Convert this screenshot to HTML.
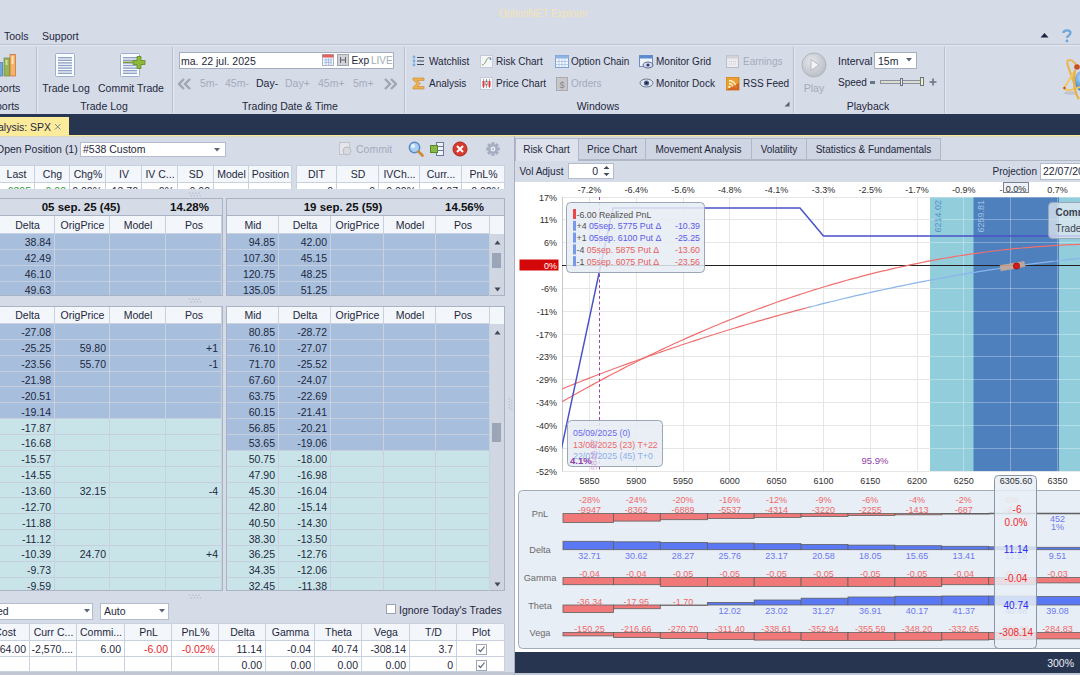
<!DOCTYPE html><html><head><meta charset="utf-8"><style>
html,body{margin:0;padding:0;}
body{width:1080px;height:675px;overflow:hidden;position:relative;background:#d6dbe8;font-family:"Liberation Sans",sans-serif;}
.t{position:absolute;white-space:nowrap;line-height:1.15;}
.r{position:absolute;}
svg{position:absolute;}
</style></head><body>
<div class="t" style="left:343.5px;width:400px;text-align:center;top:7.94px;font-size:10px;color:#f3e4b4;font-weight:normal;">OptionNET Explorer</div>
<div class="t" style="left:4px;top:30.49px;font-size:10.5px;color:#1e283c;font-weight:normal;">Tools</div>
<div class="t" style="left:42px;top:30.49px;font-size:10.5px;color:#1e283c;font-weight:normal;">Support</div>
<div class="r" style="left:0px;top:44px;width:1080px;height:1px;background:#bcc3d2;"></div>
<div class="r" style="left:0px;top:45px;width:1080px;height:1px;background:#e4e8f0;"></div>
<svg style="left:1040px;top:32px" width="9" height="6"><path d="M0.5 5.5 L4.5 1 L8.5 5.5 Z" fill="#1a2440"/></svg>
<svg style="left:1061px;top:28px" width="12" height="15"><path d="M2.5 5 C2.5 1.5 9.5 1.5 9.5 5 C9.5 7.5 6 7.5 6 10" stroke="#6fa6d8" stroke-width="2.2" fill="none"/><circle cx="6" cy="13" r="1.4" fill="#6fa6d8"/></svg>
<div class="r" style="left:36px;top:47px;width:1px;height:66px;background:#b7bfcf;"></div>
<div class="r" style="left:37px;top:47px;width:1px;height:66px;background:#e6e9f1;"></div>
<div class="r" style="left:172px;top:47px;width:1px;height:66px;background:#b7bfcf;"></div>
<div class="r" style="left:173px;top:47px;width:1px;height:66px;background:#e6e9f1;"></div>
<div class="r" style="left:404px;top:47px;width:1px;height:66px;background:#b7bfcf;"></div>
<div class="r" style="left:405px;top:47px;width:1px;height:66px;background:#e6e9f1;"></div>
<div class="r" style="left:793px;top:47px;width:1px;height:66px;background:#b7bfcf;"></div>
<div class="r" style="left:794px;top:47px;width:1px;height:66px;background:#e6e9f1;"></div>
<div class="r" style="left:944px;top:47px;width:1px;height:66px;background:#b7bfcf;"></div>
<div class="r" style="left:945px;top:47px;width:1px;height:66px;background:#e6e9f1;"></div>
<svg style="left:0px;top:52px" width="20" height="27"><rect x="-2" y="10.5" width="4.5" height="13.5" fill="#6fa8dc" stroke="#4a78a8" stroke-width="0.7"/><rect x="4" y="6" width="5.5" height="18" fill="#9ab45a" stroke="#6a8a3a" stroke-width="0.7"/><rect x="10" y="2.5" width="5.5" height="21.5" fill="#f2b469" stroke="#c86a30" stroke-width="0.7"/><rect x="11.5" y="4" width="2" height="8" fill="#fde0b0"/><rect x="5.5" y="8" width="2" height="5" fill="#d0e0a0"/></svg>
<div class="t" style="left:-3px;top:81.99px;font-size:10.5px;color:#1e283c;font-weight:normal;">ports</div>
<div class="t" style="left:-4px;top:100.49px;font-size:10.5px;color:#1e283c;font-weight:normal;">ports</div>
<svg style="left:54px;top:52px" width="24" height="27"><rect x="1.5" y="1.5" width="19" height="23" fill="#fbfcfe" stroke="#9fb0cc" stroke-width="1" rx="1"/><rect x="4" y="5.0" width="14" height="1.4" fill="#8ea3c8"/><rect x="4" y="7.6" width="14" height="1.4" fill="#8ea3c8"/><rect x="4" y="10.2" width="14" height="1.4" fill="#8ea3c8"/><rect x="4" y="12.8" width="14" height="1.4" fill="#8ea3c8"/><rect x="4" y="15.4" width="14" height="1.4" fill="#8ea3c8"/><rect x="4" y="18.0" width="14" height="1.4" fill="#8ea3c8"/><rect x="4" y="20.6" width="14" height="1.4" fill="#8ea3c8"/></svg>
<div class="t" style="left:-134px;width:400px;text-align:center;top:82.49px;font-size:10.5px;color:#1e283c;font-weight:normal;">Trade Log</div>
<svg style="left:119px;top:52px" width="28" height="27"><rect x="1.5" y="1.5" width="19" height="23" fill="#fbfcfe" stroke="#9fb0cc" stroke-width="1" rx="1"/><rect x="4" y="5.0" width="14" height="1.4" fill="#8ea3c8"/><rect x="4" y="7.6" width="14" height="1.4" fill="#8ea3c8"/><rect x="4" y="10.2" width="14" height="1.4" fill="#8ea3c8"/><rect x="4" y="12.8" width="14" height="1.4" fill="#8ea3c8"/><rect x="4" y="15.4" width="14" height="1.4" fill="#8ea3c8"/><rect x="4" y="18.0" width="14" height="1.4" fill="#8ea3c8"/><rect x="4" y="20.6" width="14" height="1.4" fill="#8ea3c8"/><path d="M14 8.5 h4 v-4 h4 v4 h4 v4 h-4 v4 h-4 v-4 h-4 z" fill="#8db83a" stroke="#5e8a22" stroke-width="0.8"/><rect x="4" y="9.5" width="10" height="1.6" fill="#7a9a3a"/></svg>
<div class="t" style="left:-69px;width:400px;text-align:center;top:82.49px;font-size:10.5px;color:#1e283c;font-weight:normal;">Commit Trade</div>
<div class="t" style="left:-96px;width:400px;text-align:center;top:100.49px;font-size:10.5px;color:#1e283c;font-weight:normal;">Trade Log</div>
<div class="r" style="left:179px;top:52px;width:215px;height:17px;background:#ffffff;border:1px solid #a6afc2;box-sizing:border-box;"></div>
<div class="t" style="left:181px;top:54.99px;font-size:10.5px;color:#1e283c;font-weight:normal;">ma. 22 jul. 2025</div>
<svg style="left:322px;top:54px" width="12" height="12"><rect x="0.5" y="0.5" width="11" height="11" fill="#f4f4f8" stroke="#b0b4c8"/><rect x="0.5" y="0.5" width="11" height="3" fill="#e0605a"/><path d="M2 6h8M2 8.5h8M4 4v7M6.5 4v7M9 4v7" stroke="#8eb0e0" stroke-width="0.7"/></svg>
<svg style="left:337px;top:54px" width="12" height="12"><rect x="0.5" y="0.5" width="11" height="11" fill="#d0d2d8" stroke="#a0a4b0"/><path d="M3.5 3v6M8.5 3v6M3.5 6h5" stroke="#606470" stroke-width="1"/></svg>
<div class="t" style="left:351.5px;top:55.26px;font-size:10.2px;color:#1e283c;font-weight:normal;">Exp</div>
<div class="t" style="left:371px;top:55.45px;font-size:10px;color:#a3abbb;font-weight:normal;">LIVE</div>
<svg style="left:178px;top:78px" width="14" height="12"><path d="M6 1 L1 6 L6 11 M12 1 L7 6 L12 11" stroke="#a0a6b4" stroke-width="2.4" fill="none"/></svg>
<svg style="left:383px;top:78px" width="14" height="12"><path d="M8 1 L13 6 L8 11 M2 1 L7 6 L2 11" stroke="#a0a6b4" stroke-width="2.4" fill="none"/></svg>
<div class="t" style="left:200px;top:76.99px;font-size:10.5px;color:#a3abbb;font-weight:normal;">5m-</div>
<div class="t" style="left:225px;top:76.99px;font-size:10.5px;color:#a3abbb;font-weight:normal;">45m-</div>
<div class="t" style="left:256px;top:76.99px;font-size:10.5px;color:#1e283c;font-weight:normal;">Day-</div>
<div class="t" style="left:285px;top:76.99px;font-size:10.5px;color:#a3abbb;font-weight:normal;">Day+</div>
<div class="t" style="left:318px;top:76.99px;font-size:10.5px;color:#a3abbb;font-weight:normal;">45m+</div>
<div class="t" style="left:353px;top:76.99px;font-size:10.5px;color:#a3abbb;font-weight:normal;">5m+</div>
<div class="t" style="left:90px;width:400px;text-align:center;top:100.49px;font-size:10.5px;color:#1e283c;font-weight:normal;">Trading Date &amp; Time</div>
<svg style="left:412px;top:55px" width="14" height="12"><path d="M2 1.5v9" stroke="#a8c8e8" stroke-width="1"/><circle cx="2" cy="2" r="1.4" fill="#7aaee0"/><circle cx="2" cy="6" r="1.4" fill="#7aaee0"/><circle cx="2" cy="10" r="1.4" fill="#7aaee0"/><path d="M5 2.5h7M5 6h7M5 9.5h7" stroke="#404858" stroke-width="1.1"/></svg>
<div class="t" style="left:429px;top:56.24px;font-size:10px;color:#1e283c;font-weight:normal;">Watchlist</div>
<svg style="left:480px;top:55px" width="14" height="14"><rect x="0.5" y="0.5" width="12" height="12" fill="#f4f6fa" stroke="#c4cad8"/><path d="M2 10 C4 10 5 8 6 6 C7 3 9 2 11 3" stroke="#7aa050" stroke-width="1" fill="none"/><circle cx="10.5" cy="4" r="1" fill="#5a8ad0"/></svg>
<div class="t" style="left:496px;top:56.24px;font-size:10px;color:#1e283c;font-weight:normal;">Risk Chart</div>
<svg style="left:555px;top:55px" width="14" height="13"><rect x="0.5" y="0.5" width="13" height="12" fill="#f4f8fe" stroke="#7aa2d8"/><rect x="0.5" y="0.5" width="13" height="3" fill="#8fb4e4"/><path d="M0.5 6.5h13M0.5 9.5h13M4 3.5v9M7 3.5v9M10 3.5v9" stroke="#9ebce4" stroke-width="0.7"/></svg>
<div class="t" style="left:571px;top:56.24px;font-size:10px;color:#1e283c;font-weight:normal;">Option Chain</div>
<svg style="left:639px;top:55px" width="15" height="14"><rect x="0.5" y="0.5" width="13" height="11" fill="#f0f4fa" stroke="#6a8ec8"/><rect x="0.5" y="0.5" width="13" height="3" fill="#5a8ad0"/><ellipse cx="9" cy="10" rx="5" ry="3" fill="#d8dce8" stroke="#405080" stroke-width="0.8"/><circle cx="9" cy="10" r="1.6" fill="#304070"/></svg>
<div class="t" style="left:656px;top:56.24px;font-size:10px;color:#1e283c;font-weight:normal;">Monitor Grid</div>
<svg style="left:726px;top:55px" width="14" height="14"><rect x="0.5" y="0.5" width="12" height="12" fill="#ececf0" stroke="#bcbcc4"/><rect x="0.5" y="0.5" width="12" height="3" fill="#d0d0d6"/><path d="M3 6.5h7M3 9h7" stroke="#c8c8d0" stroke-width="0.9" stroke-dasharray="1 1"/></svg>
<div class="t" style="left:743px;top:56.24px;font-size:10px;color:#a3abbb;font-weight:normal;">Earnings</div>
<svg style="left:412px;top:77px" width="14" height="13"><path d="M1 1 H12 V3.5 H5 L8.5 6.5 L5 9.5 H12 V12 H1 V10 L5 6.5 L1 3 Z" fill="#f0b050" stroke="#c88828" stroke-width="0.6"/></svg>
<div class="t" style="left:429px;top:78.25px;font-size:10px;color:#1e283c;font-weight:normal;">Analysis</div>
<svg style="left:480px;top:77px" width="14" height="14"><rect x="0.5" y="0.5" width="12" height="12" fill="#f4f6fa" stroke="#c4cad8"/><path d="M3.5 2v9M6.5 2v9M9.5 2v9" stroke="#707070" stroke-width="0.6"/><path d="M2.5 4h2v5l-1 2l-1-2z" fill="#e03a3a"/><path d="M8.5 4h2v5l-1 2l-1-2z" fill="#e03a3a"/><rect x="5.8" y="4" width="1.4" height="4" fill="#f8f8f8" stroke="#606060" stroke-width="0.5"/></svg>
<div class="t" style="left:496px;top:78.25px;font-size:10px;color:#1e283c;font-weight:normal;">Price Chart</div>
<svg style="left:555px;top:77px" width="14" height="14"><rect x="1.5" y="0.5" width="11" height="13" fill="#c8c8cc" stroke="#a8a8b0"/><text x="7" y="11" font-size="9" text-anchor="middle" fill="#888" font-family="Liberation Sans">$</text></svg>
<div class="t" style="left:571px;top:78.25px;font-size:10px;color:#a3abbb;font-weight:normal;">Orders</div>
<svg style="left:639px;top:77px" width="15" height="12"><ellipse cx="7.5" cy="6" rx="6.5" ry="4" fill="#e0e4ec" stroke="#707a90" stroke-width="1"/><circle cx="7.5" cy="6" r="2.6" fill="#4a6090"/><circle cx="7.5" cy="6" r="1.2" fill="#1a2030"/></svg>
<div class="t" style="left:656px;top:78.25px;font-size:10px;color:#1e283c;font-weight:normal;">Monitor Dock</div>
<svg style="left:726px;top:77px" width="14" height="14"><rect x="0" y="0" width="13" height="13" fill="#e8a030" stroke="#c87818" stroke-width="0.8"/><path d="M3 3.5 A7 7 0 0 1 10 10.5 M3 6.5 A4 4 0 0 1 7 10.5" stroke="#fff4d8" stroke-width="1.3" fill="none"/><circle cx="3.5" cy="10" r="1.2" fill="#fff4d8"/><path d="M0 13 L13 6 V13 Z" fill="#d05020" opacity="0.7"/></svg>
<div class="t" style="left:743px;top:78.25px;font-size:10px;color:#1e283c;font-weight:normal;">RSS Feed</div>
<div class="t" style="left:398px;width:400px;text-align:center;top:100.49px;font-size:10.5px;color:#1e283c;font-weight:normal;">Windows</div>
<svg style="left:784px;top:101px" width="6" height="6"><path d="M5.5 0.5 V5.5 H0.5 Z" fill="#5a6478"/></svg>
<svg style="left:801px;top:52px" width="27" height="27"><defs><radialGradient id="pg" cx="0.4" cy="0.35" r="0.7"><stop offset="0" stop-color="#e4e6ea"/><stop offset="1" stop-color="#b8bcc4"/></radialGradient></defs><circle cx="13" cy="13" r="12" fill="url(#pg)" stroke="#b0b4bc"/><path d="M10 7.5 L18 13 L10 18.5 Z" fill="#f4f4f6" stroke="#a8acb4" stroke-width="0.8"/></svg>
<div class="t" style="left:614px;width:400px;text-align:center;top:82.49px;font-size:10.5px;color:#a3abbb;font-weight:normal;">Play</div>
<div class="t" style="left:838px;top:54.99px;font-size:10.5px;color:#1e283c;font-weight:normal;">Interval</div>
<div class="r" style="left:874px;top:52px;width:43px;height:17px;background:#ffffff;border:1px solid #a6afc2;box-sizing:border-box;"></div>
<div class="t" style="left:878px;top:54.99px;font-size:10.5px;color:#1e283c;font-weight:normal;">15m</div>
<svg style="left:906px;top:58px" width="6" height="4"><path d="M0 0 H6 L3 3.5 Z" fill="#5a6478"/></svg>
<div class="t" style="left:838px;top:77.45px;font-size:10px;color:#1e283c;font-weight:normal;">Speed</div>
<div class="r" style="left:870px;top:81px;width:5px;height:3px;background:#6a7488;"></div>
<div class="r" style="left:880px;top:80px;width:42px;height:4px;background:#dcdcd0;border:1px solid #8a90a0;box-sizing:border-box;"></div>
<div class="r" style="left:900px;top:78px;width:3px;height:8px;background:#e8e8e8;border:1px solid #6a7488;box-sizing:border-box;"></div>
<div class="r" style="left:920px;top:77px;width:4px;height:9px;background:#f8f0b0;border:1px solid #6a7488;box-sizing:border-box;"></div>
<svg style="left:929px;top:78px" width="8" height="8"><path d="M4 0.5v7M0.5 4h7" stroke="#6a7488" stroke-width="1.6"/></svg>
<div class="t" style="left:668px;width:400px;text-align:center;top:100.49px;font-size:10.5px;color:#1e283c;font-weight:normal;">Playback</div>
<svg style="left:1055px;top:52px" width="25" height="50"><defs><radialGradient id="sph" cx="0.35" cy="0.35" r="0.8"><stop offset="0" stop-color="#c8e4fa"/><stop offset="0.5" stop-color="#5a9ad8"/><stop offset="1" stop-color="#2a5aa0"/></radialGradient></defs><ellipse cx="16" cy="41" rx="7" ry="1.8" fill="#b8bcc8" opacity="0.7"/><circle cx="31" cy="29" r="11.5" fill="url(#sph)"/><path d="M22 14 C17 6 10 6 13 14 L20 34" stroke="#e8b850" stroke-width="2.2" fill="none"/><path d="M9 36 L19 20" stroke="#f0c860" stroke-width="2" fill="none"/><path d="M9 36 C11 40 17 38 25 35" stroke="#f0c860" stroke-width="2" fill="none"/><path d="M20 18 C18 28 19 40 24 47" stroke="#e8b040" stroke-width="2.2" fill="none"/><circle cx="22" cy="15" r="2.8" fill="#c8501c"/><circle cx="9.5" cy="36" r="1.3" fill="#c8501c"/></svg>
<div class="r" style="left:0px;top:114px;width:1080px;height:21px;background:#283551;"></div>
<div class="r" style="left:0px;top:135px;width:1080px;height:1px;background:#f8e89c;"></div>
<div class="r" style="left:0px;top:136px;width:1080px;height:1px;background:#d8d9c4;"></div>
<div class="r" style="left:0px;top:117px;width:69px;height:19px;background:#fdeb9c;"></div>
<div class="t" style="left:-2px;top:120.99px;font-size:10.5px;color:#1e283c;font-weight:normal;">alysis: SPX</div>
<svg style="left:54px;top:123px" width="8" height="8"><path d="M1 1 L6.5 6.5 M6.5 1 L1 6.5" stroke="#7a8498" stroke-width="1"/></svg>
<div class="t" style="left:-4px;top:143.49px;font-size:10.5px;color:#1e283c;font-weight:normal;">Open Position (1)</div>
<div class="r" style="left:80px;top:142px;width:146px;height:15px;background:#ffffff;border:1px solid #b3bccd;box-sizing:border-box;"></div>
<div class="t" style="left:83px;top:143.49px;font-size:10.5px;color:#1e283c;font-weight:normal;">#538 Custom</div>
<svg style="left:214px;top:148px" width="6" height="4"><path d="M0 0 H6 L3 3.5 Z" fill="#5a6478"/></svg>
<svg style="left:339px;top:142px" width="14" height="14"><rect x="0.5" y="0.5" width="10" height="12" fill="#e4e6ea" stroke="#c0c4cc"/><circle cx="8" cy="9" r="4" fill="#d8dade" stroke="#b8bcc4"/></svg>
<div class="t" style="left:356px;top:143.49px;font-size:10.5px;color:#a3abbb;font-weight:normal;">Commit</div>
<svg style="left:408px;top:141px" width="16" height="16"><circle cx="6.5" cy="6.5" r="5.2" fill="#a8d0f4" stroke="#5a8ac4" stroke-width="1.4"/><circle cx="5" cy="5" r="2" fill="#e8f4ff"/><path d="M10.5 10.5 L14.5 14.5" stroke="#d08a30" stroke-width="2.6" stroke-linecap="round"/></svg>
<svg style="left:430px;top:142px" width="15" height="14"><rect x="6.5" y="0.5" width="7" height="13" fill="#f0f4fa" stroke="#6a7a98"/><path d="M6.5 4.5h7M6.5 8.5h7" stroke="#6a7a98"/><rect x="0.5" y="3.5" width="7" height="7" fill="#8ab848" stroke="#5a8828"/></svg>
<svg style="left:452px;top:141px" width="16" height="16"><circle cx="8" cy="8" r="7" fill="#d83a30" stroke="#a82820"/><path d="M5 5 L11 11 M11 5 L5 11" stroke="#fff" stroke-width="2"/></svg>
<svg style="left:486px;top:142px" width="14" height="14"><g transform="translate(7 7)"><rect x="-1.6" y="-6.8" width="3.2" height="3" fill="#a4aec0" transform="rotate(0)"/><rect x="-1.6" y="-6.8" width="3.2" height="3" fill="#a4aec0" transform="rotate(45)"/><rect x="-1.6" y="-6.8" width="3.2" height="3" fill="#a4aec0" transform="rotate(90)"/><rect x="-1.6" y="-6.8" width="3.2" height="3" fill="#a4aec0" transform="rotate(135)"/><rect x="-1.6" y="-6.8" width="3.2" height="3" fill="#a4aec0" transform="rotate(180)"/><rect x="-1.6" y="-6.8" width="3.2" height="3" fill="#a4aec0" transform="rotate(225)"/><rect x="-1.6" y="-6.8" width="3.2" height="3" fill="#a4aec0" transform="rotate(270)"/><rect x="-1.6" y="-6.8" width="3.2" height="3" fill="#a4aec0" transform="rotate(315)"/><circle r="4.7" fill="#a4aec0"/><circle r="2.4" fill="#eef1f6"/><circle r="1.2" fill="#b8c0d0"/></g></svg>
<div class="r" style="left:-2px;top:165px;width:294px;height:24px;overflow:hidden;">
<div class="r" style="left:0px;top:0px;width:294px;height:18px;background:#f3f6fb;"></div>
<div class="r" style="left:0px;top:18px;width:294px;height:15px;background:#ffffff;"></div>
<div class="r" style="left:0px;top:32px;width:294px;height:1px;background:#c9d1de;"></div>
<div class="r" style="left:0px;top:17px;width:294px;height:1px;background:#c9d1de;"></div>
<div class="r" style="left:36px;top:0px;width:1px;height:24px;background:#c9d1de;"></div>
<div class="r" style="left:71px;top:0px;width:1px;height:24px;background:#c9d1de;"></div>
<div class="r" style="left:107px;top:0px;width:1px;height:24px;background:#c9d1de;"></div>
<div class="r" style="left:143px;top:0px;width:1px;height:24px;background:#c9d1de;"></div>
<div class="r" style="left:179px;top:0px;width:1px;height:24px;background:#c9d1de;"></div>
<div class="r" style="left:215px;top:0px;width:1px;height:24px;background:#c9d1de;"></div>
<div class="r" style="left:250px;top:0px;width:1px;height:24px;background:#c9d1de;"></div>
<div class="r" style="left:293px;top:0px;width:1px;height:24px;background:#c9d1de;"></div>
<div class="t" style="left:-181.5px;width:400px;text-align:center;top:3.49px;font-size:10.5px;color:#1e283c;font-weight:normal;">Last</div>
<div class="t" style="left:-145.5px;width:400px;text-align:center;top:3.49px;font-size:10.5px;color:#1e283c;font-weight:normal;">Chg</div>
<div class="t" style="left:-110.0px;width:400px;text-align:center;top:3.49px;font-size:10.5px;color:#1e283c;font-weight:normal;">Chg%</div>
<div class="t" style="left:-74.0px;width:400px;text-align:center;top:3.49px;font-size:10.5px;color:#1e283c;font-weight:normal;">IV</div>
<div class="t" style="left:-38.0px;width:400px;text-align:center;top:3.49px;font-size:10.5px;color:#1e283c;font-weight:normal;">IV C...</div>
<div class="t" style="left:-2.0px;width:400px;text-align:center;top:3.49px;font-size:10.5px;color:#1e283c;font-weight:normal;">SD</div>
<div class="t" style="left:33.5px;width:400px;text-align:center;top:3.49px;font-size:10.5px;color:#1e283c;font-weight:normal;">Model</div>
<div class="t" style="left:72.5px;width:400px;text-align:center;top:3.49px;font-size:10.5px;color:#1e283c;font-weight:normal;">Position</div>
<div class="t" style="left:0px;width:33px;text-align:right;top:19.50px;font-size:10.5px;color:#2a9a3a">6305</div>
<div class="t" style="left:37px;width:31px;text-align:right;top:19.50px;font-size:10.5px;color:#2a9a3a">0.00</div>
<div class="t" style="left:72px;width:32px;text-align:right;top:19.50px;font-size:10.5px;color:#1e283c">0.00%</div>
<div class="t" style="left:108px;width:32px;text-align:right;top:19.50px;font-size:10.5px;color:#1e283c">13.70</div>
<div class="t" style="left:144px;width:32px;text-align:right;top:19.50px;font-size:10.5px;color:#1e283c">0%</div>
<div class="t" style="left:180px;width:32px;text-align:right;top:19.50px;font-size:10.5px;color:#1e283c">0.00</div>
</div>
<div class="r" style="left:-2px;top:165px;width:294px;height:1px;background:#c9d1de;"></div>
<div class="r" style="left:296px;top:165px;width:209px;height:24px;overflow:hidden;">
<div class="r" style="left:0px;top:0px;width:209px;height:18px;background:#f3f6fb;"></div>
<div class="r" style="left:0px;top:18px;width:209px;height:15px;background:#ffffff;"></div>
<div class="r" style="left:0px;top:32px;width:209px;height:1px;background:#c9d1de;"></div>
<div class="r" style="left:0px;top:17px;width:209px;height:1px;background:#c9d1de;"></div>
<div class="r" style="left:40px;top:0px;width:1px;height:24px;background:#c9d1de;"></div>
<div class="r" style="left:82px;top:0px;width:1px;height:24px;background:#c9d1de;"></div>
<div class="r" style="left:123px;top:0px;width:1px;height:24px;background:#c9d1de;"></div>
<div class="r" style="left:165px;top:0px;width:1px;height:24px;background:#c9d1de;"></div>
<div class="r" style="left:208px;top:0px;width:1px;height:24px;background:#c9d1de;"></div>
<div class="t" style="left:-179.5px;width:400px;text-align:center;top:3.49px;font-size:10.5px;color:#1e283c;font-weight:normal;">DIT</div>
<div class="t" style="left:-138.0px;width:400px;text-align:center;top:3.49px;font-size:10.5px;color:#1e283c;font-weight:normal;">SD</div>
<div class="t" style="left:-96.5px;width:400px;text-align:center;top:3.49px;font-size:10.5px;color:#1e283c;font-weight:normal;">IVCh...</div>
<div class="t" style="left:-55.0px;width:400px;text-align:center;top:3.49px;font-size:10.5px;color:#1e283c;font-weight:normal;">Curr...</div>
<div class="t" style="left:-12.5px;width:400px;text-align:center;top:3.49px;font-size:10.5px;color:#1e283c;font-weight:normal;">PnL%</div>
<div class="t" style="left:0px;width:37px;text-align:right;top:19.50px;font-size:10.5px;color:#1e283c">0</div>
<div class="t" style="left:41px;width:38px;text-align:right;top:19.50px;font-size:10.5px;color:#1e283c">0</div>
<div class="t" style="left:83px;width:37px;text-align:right;top:19.50px;font-size:10.5px;color:#1e283c">0.00%</div>
<div class="t" style="left:124px;width:38px;text-align:right;top:19.50px;font-size:10.5px;color:#1e283c">24.07</div>
<div class="t" style="left:166px;width:39px;text-align:right;top:19.50px;font-size:10.5px;color:#1e283c">0.02%</div>
</div>
<div class="r" style="left:296px;top:165px;width:209px;height:1px;background:#c9d1de;"></div>
<div class="r" style="left:296px;top:165px;width:1px;height:24px;background:#c9d1de;"></div>
<svg style="left:189px;top:192px" width="12" height="5"><rect x="0" y="0.5" width="1.5" height="1.5" fill="#bcc2cf"/><rect x="1.5" y="3" width="1.5" height="1.5" fill="#bcc2cf"/><rect x="3" y="0.5" width="1.5" height="1.5" fill="#bcc2cf"/><rect x="4.5" y="3" width="1.5" height="1.5" fill="#bcc2cf"/><rect x="6" y="0.5" width="1.5" height="1.5" fill="#bcc2cf"/><rect x="7.5" y="3" width="1.5" height="1.5" fill="#bcc2cf"/><rect x="9" y="0.5" width="1.5" height="1.5" fill="#bcc2cf"/><rect x="10.5" y="3" width="1.5" height="1.5" fill="#bcc2cf"/></svg>
<svg style="left:189px;top:298px" width="12" height="5"><rect x="0" y="0.5" width="1.5" height="1.5" fill="#bcc2cf"/><rect x="1.5" y="3" width="1.5" height="1.5" fill="#bcc2cf"/><rect x="3" y="0.5" width="1.5" height="1.5" fill="#bcc2cf"/><rect x="4.5" y="3" width="1.5" height="1.5" fill="#bcc2cf"/><rect x="6" y="0.5" width="1.5" height="1.5" fill="#bcc2cf"/><rect x="7.5" y="3" width="1.5" height="1.5" fill="#bcc2cf"/><rect x="9" y="0.5" width="1.5" height="1.5" fill="#bcc2cf"/><rect x="10.5" y="3" width="1.5" height="1.5" fill="#bcc2cf"/></svg>
<svg style="left:189px;top:594px" width="12" height="5"><rect x="0" y="0.5" width="1.5" height="1.5" fill="#bcc2cf"/><rect x="1.5" y="3" width="1.5" height="1.5" fill="#bcc2cf"/><rect x="3" y="0.5" width="1.5" height="1.5" fill="#bcc2cf"/><rect x="4.5" y="3" width="1.5" height="1.5" fill="#bcc2cf"/><rect x="6" y="0.5" width="1.5" height="1.5" fill="#bcc2cf"/><rect x="7.5" y="3" width="1.5" height="1.5" fill="#bcc2cf"/><rect x="9" y="0.5" width="1.5" height="1.5" fill="#bcc2cf"/><rect x="10.5" y="3" width="1.5" height="1.5" fill="#bcc2cf"/></svg>
<svg style="left:508px;top:398px" width="5" height="12"><rect x="0.5" y="0" width="1.5" height="1.5" fill="#bcc2cf"/><rect x="3" y="1.5" width="1.5" height="1.5" fill="#bcc2cf"/><rect x="0.5" y="3" width="1.5" height="1.5" fill="#bcc2cf"/><rect x="3" y="4.5" width="1.5" height="1.5" fill="#bcc2cf"/><rect x="0.5" y="6" width="1.5" height="1.5" fill="#bcc2cf"/><rect x="3" y="7.5" width="1.5" height="1.5" fill="#bcc2cf"/><rect x="0.5" y="9" width="1.5" height="1.5" fill="#bcc2cf"/><rect x="3" y="10.5" width="1.5" height="1.5" fill="#bcc2cf"/></svg>
<div class="r" style="left:-20px;top:198px;width:243px;height:98px;background:#d6dbe8;border:1px solid #aab3c4;box-sizing:border-box;"></div>
<div class="r" style="left:-20px;top:215px;width:243px;height:1px;background:#aab3c4;"></div>
<div class="t" style="left:-119px;width:400px;text-align:center;top:201.09px;font-size:11.5px;color:#111111;font-weight:bold;">05 sep. 25 (45)</div>
<div class="t" style="right:871px;top:201.09px;font-size:11.5px;color:#111111;font-weight:bold;">14.28%</div>
<div class="r" style="left:-19px;top:216px;width:241px;height:79px;overflow:hidden;">
<div class="r" style="left:0px;top:0px;width:241px;height:18px;background:#f3f6fb;"></div>
<div class="r" style="left:0px;top:18.0px;width:241px;height:15.86px;background:#a7bfdd;"></div>
<div class="r" style="left:0px;top:32.86px;width:241px;height:1px;background:#c5cfde;"></div>
<div class="r" style="left:0px;top:33.86px;width:241px;height:15.86px;background:#a7bfdd;"></div>
<div class="r" style="left:0px;top:48.72px;width:241px;height:1px;background:#c5cfde;"></div>
<div class="r" style="left:0px;top:49.72px;width:241px;height:15.86px;background:#a7bfdd;"></div>
<div class="r" style="left:0px;top:64.58px;width:241px;height:1px;background:#c5cfde;"></div>
<div class="r" style="left:0px;top:65.58px;width:241px;height:15.86px;background:#a7bfdd;"></div>
<div class="r" style="left:0px;top:80.44px;width:241px;height:1px;background:#c5cfde;"></div>
<div class="r" style="left:0px;top:17px;width:241px;height:1px;background:#c9d1de;"></div>
<div class="r" style="left:73px;top:0px;width:1px;height:79px;background:#c9d1de;"></div>
<div class="r" style="left:128px;top:0px;width:1px;height:79px;background:#c9d1de;"></div>
<div class="r" style="left:184px;top:0px;width:1px;height:79px;background:#c9d1de;"></div>
<div class="r" style="left:240px;top:0px;width:1px;height:79px;background:#c9d1de;"></div>
<div class="t" style="left:-153.5px;width:400px;text-align:center;top:3.49px;font-size:10.5px;color:#1e283c;font-weight:normal;">Delta</div>
<div class="t" style="left:-98.5px;width:400px;text-align:center;top:3.49px;font-size:10.5px;color:#1e283c;font-weight:normal;">OrigPrice</div>
<div class="t" style="left:-43.0px;width:400px;text-align:center;top:3.49px;font-size:10.5px;color:#1e283c;font-weight:normal;">Model</div>
<div class="t" style="left:13.0px;width:400px;text-align:center;top:3.49px;font-size:10.5px;color:#1e283c;font-weight:normal;">Pos</div>
<div class="t" style="left:19px;width:51px;text-align:right;top:20.36px;font-size:10.5px;color:#1e283c">38.84</div>
<div class="t" style="left:19px;width:51px;text-align:right;top:36.22px;font-size:10.5px;color:#1e283c">42.49</div>
<div class="t" style="left:19px;width:51px;text-align:right;top:52.08px;font-size:10.5px;color:#1e283c">46.10</div>
<div class="t" style="left:19px;width:51px;text-align:right;top:67.94px;font-size:10.5px;color:#1e283c">49.63</div>
</div>
<div class="r" style="left:226px;top:198px;width:279px;height:98px;background:#d6dbe8;border:1px solid #aab3c4;box-sizing:border-box;"></div>
<div class="r" style="left:226px;top:215px;width:279px;height:1px;background:#aab3c4;"></div>
<div class="t" style="left:143px;width:400px;text-align:center;top:201.09px;font-size:11.5px;color:#111111;font-weight:bold;">19 sep. 25 (59)</div>
<div class="t" style="right:596px;top:201.09px;font-size:11.5px;color:#111111;font-weight:bold;">14.56%</div>
<div class="r" style="left:227px;top:216px;width:263px;height:79px;overflow:hidden;">
<div class="r" style="left:0px;top:0px;width:263px;height:18px;background:#f3f6fb;"></div>
<div class="r" style="left:0px;top:18.0px;width:263px;height:15.86px;background:#a7bfdd;"></div>
<div class="r" style="left:0px;top:32.86px;width:263px;height:1px;background:#c5cfde;"></div>
<div class="r" style="left:0px;top:33.86px;width:263px;height:15.86px;background:#a7bfdd;"></div>
<div class="r" style="left:0px;top:48.72px;width:263px;height:1px;background:#c5cfde;"></div>
<div class="r" style="left:0px;top:49.72px;width:263px;height:15.86px;background:#a7bfdd;"></div>
<div class="r" style="left:0px;top:64.58px;width:263px;height:1px;background:#c5cfde;"></div>
<div class="r" style="left:0px;top:65.58px;width:263px;height:15.86px;background:#a7bfdd;"></div>
<div class="r" style="left:0px;top:80.44px;width:263px;height:1px;background:#c5cfde;"></div>
<div class="r" style="left:0px;top:17px;width:263px;height:1px;background:#c9d1de;"></div>
<div class="r" style="left:51px;top:0px;width:1px;height:79px;background:#c9d1de;"></div>
<div class="r" style="left:103px;top:0px;width:1px;height:79px;background:#c9d1de;"></div>
<div class="r" style="left:156px;top:0px;width:1px;height:79px;background:#c9d1de;"></div>
<div class="r" style="left:208px;top:0px;width:1px;height:79px;background:#c9d1de;"></div>
<div class="r" style="left:262px;top:0px;width:1px;height:79px;background:#c9d1de;"></div>
<div class="t" style="left:-174.0px;width:400px;text-align:center;top:3.49px;font-size:10.5px;color:#1e283c;font-weight:normal;">Mid</div>
<div class="t" style="left:-122.0px;width:400px;text-align:center;top:3.49px;font-size:10.5px;color:#1e283c;font-weight:normal;">Delta</div>
<div class="t" style="left:-69.5px;width:400px;text-align:center;top:3.49px;font-size:10.5px;color:#1e283c;font-weight:normal;">OrigPrice</div>
<div class="t" style="left:-17.0px;width:400px;text-align:center;top:3.49px;font-size:10.5px;color:#1e283c;font-weight:normal;">Model</div>
<div class="t" style="left:36.0px;width:400px;text-align:center;top:3.49px;font-size:10.5px;color:#1e283c;font-weight:normal;">Pos</div>
<div class="t" style="left:0px;width:48px;text-align:right;top:20.36px;font-size:10.5px;color:#1e283c">94.85</div>
<div class="t" style="left:52px;width:48px;text-align:right;top:20.36px;font-size:10.5px;color:#1e283c">42.00</div>
<div class="t" style="left:0px;width:48px;text-align:right;top:36.22px;font-size:10.5px;color:#1e283c">107.30</div>
<div class="t" style="left:52px;width:48px;text-align:right;top:36.22px;font-size:10.5px;color:#1e283c">45.15</div>
<div class="t" style="left:0px;width:48px;text-align:right;top:52.08px;font-size:10.5px;color:#1e283c">120.75</div>
<div class="t" style="left:52px;width:48px;text-align:right;top:52.08px;font-size:10.5px;color:#1e283c">48.25</div>
<div class="t" style="left:0px;width:48px;text-align:right;top:67.94px;font-size:10.5px;color:#1e283c">135.05</div>
<div class="t" style="left:52px;width:48px;text-align:right;top:67.94px;font-size:10.5px;color:#1e283c">51.25</div>
</div>
<div class="r" style="left:490px;top:216px;width:14px;height:18px;background:#f3f6fb;"></div>
<div class="r" style="left:489px;top:216px;width:1px;height:80px;background:#c9d1de;"></div>
<div class="r" style="left:490px;top:234px;width:14px;height:61px;background:#d0d6e2;"></div>
<div class="r" style="left:492px;top:253px;width:9px;height:15px;background:#9aa5b8;"></div>
<svg style="left:494px;top:240px" width="7" height="5"><path d="M0.5 4.5 L3.5 0.5 L6.5 4.5 Z" fill="#404a5c"/></svg>
<svg style="left:494px;top:287px" width="7" height="5"><path d="M0.5 0.5 L3.5 4.5 L6.5 0.5 Z" fill="#404a5c"/></svg>
<div class="r" style="left:-20px;top:306px;width:243px;height:285px;background:#d6dbe8;border:1px solid #aab3c4;box-sizing:border-box;"></div>
<div class="r" style="left:-19px;top:307px;width:241px;height:283px;overflow:hidden;">
<div class="r" style="left:0px;top:0px;width:241px;height:17px;background:#f3f6fb;"></div>
<div class="r" style="left:0px;top:17.0px;width:241px;height:15.86px;background:#a7bfdd;"></div>
<div class="r" style="left:0px;top:31.86px;width:241px;height:1px;background:#c5cfde;"></div>
<div class="r" style="left:0px;top:32.86px;width:241px;height:15.86px;background:#a7bfdd;"></div>
<div class="r" style="left:0px;top:47.72px;width:241px;height:1px;background:#c5cfde;"></div>
<div class="r" style="left:0px;top:48.72px;width:241px;height:15.86px;background:#a7bfdd;"></div>
<div class="r" style="left:0px;top:63.58px;width:241px;height:1px;background:#c5cfde;"></div>
<div class="r" style="left:0px;top:64.58px;width:241px;height:15.86px;background:#a7bfdd;"></div>
<div class="r" style="left:0px;top:79.44px;width:241px;height:1px;background:#c5cfde;"></div>
<div class="r" style="left:0px;top:80.44px;width:241px;height:15.86px;background:#a7bfdd;"></div>
<div class="r" style="left:0px;top:95.3px;width:241px;height:1px;background:#c5cfde;"></div>
<div class="r" style="left:0px;top:96.3px;width:241px;height:15.86px;background:#a7bfdd;"></div>
<div class="r" style="left:0px;top:111.16px;width:241px;height:1px;background:#c5cfde;"></div>
<div class="r" style="left:0px;top:112.16px;width:241px;height:15.86px;background:#c8e4e9;"></div>
<div class="r" style="left:0px;top:127.01999999999998px;width:241px;height:1px;background:#c5cfde;"></div>
<div class="r" style="left:0px;top:128.01999999999998px;width:241px;height:15.86px;background:#c8e4e9;"></div>
<div class="r" style="left:0px;top:142.88px;width:241px;height:1px;background:#c5cfde;"></div>
<div class="r" style="left:0px;top:143.88px;width:241px;height:15.86px;background:#c8e4e9;"></div>
<div class="r" style="left:0px;top:158.74px;width:241px;height:1px;background:#c5cfde;"></div>
<div class="r" style="left:0px;top:159.74px;width:241px;height:15.86px;background:#c8e4e9;"></div>
<div class="r" style="left:0px;top:174.6px;width:241px;height:1px;background:#c5cfde;"></div>
<div class="r" style="left:0px;top:175.6px;width:241px;height:15.86px;background:#c8e4e9;"></div>
<div class="r" style="left:0px;top:190.45999999999998px;width:241px;height:1px;background:#c5cfde;"></div>
<div class="r" style="left:0px;top:191.45999999999998px;width:241px;height:15.86px;background:#c8e4e9;"></div>
<div class="r" style="left:0px;top:206.32px;width:241px;height:1px;background:#c5cfde;"></div>
<div class="r" style="left:0px;top:207.32px;width:241px;height:15.86px;background:#c8e4e9;"></div>
<div class="r" style="left:0px;top:222.18px;width:241px;height:1px;background:#c5cfde;"></div>
<div class="r" style="left:0px;top:223.18px;width:241px;height:15.86px;background:#c8e4e9;"></div>
<div class="r" style="left:0px;top:238.04px;width:241px;height:1px;background:#c5cfde;"></div>
<div class="r" style="left:0px;top:239.04px;width:241px;height:15.86px;background:#c8e4e9;"></div>
<div class="r" style="left:0px;top:253.89999999999998px;width:241px;height:1px;background:#c5cfde;"></div>
<div class="r" style="left:0px;top:254.89999999999998px;width:241px;height:15.86px;background:#c8e4e9;"></div>
<div class="r" style="left:0px;top:269.76px;width:241px;height:1px;background:#c5cfde;"></div>
<div class="r" style="left:0px;top:270.76px;width:241px;height:15.86px;background:#c8e4e9;"></div>
<div class="r" style="left:0px;top:285.62px;width:241px;height:1px;background:#c5cfde;"></div>
<div class="r" style="left:0px;top:16px;width:241px;height:1px;background:#c9d1de;"></div>
<div class="r" style="left:73px;top:0px;width:1px;height:283px;background:#c9d1de;"></div>
<div class="r" style="left:128px;top:0px;width:1px;height:283px;background:#c9d1de;"></div>
<div class="r" style="left:184px;top:0px;width:1px;height:283px;background:#c9d1de;"></div>
<div class="r" style="left:240px;top:0px;width:1px;height:283px;background:#c9d1de;"></div>
<div class="t" style="left:-153.5px;width:400px;text-align:center;top:2.49px;font-size:10.5px;color:#1e283c;font-weight:normal;">Delta</div>
<div class="t" style="left:-98.5px;width:400px;text-align:center;top:2.49px;font-size:10.5px;color:#1e283c;font-weight:normal;">OrigPrice</div>
<div class="t" style="left:-43.0px;width:400px;text-align:center;top:2.49px;font-size:10.5px;color:#1e283c;font-weight:normal;">Model</div>
<div class="t" style="left:13.0px;width:400px;text-align:center;top:2.49px;font-size:10.5px;color:#1e283c;font-weight:normal;">Pos</div>
<div class="t" style="left:19px;width:51px;text-align:right;top:19.36px;font-size:10.5px;color:#1e283c">-27.08</div>
<div class="t" style="left:19px;width:51px;text-align:right;top:35.22px;font-size:10.5px;color:#1e283c">-25.25</div>
<div class="t" style="left:74px;width:51px;text-align:right;top:35.22px;font-size:10.5px;color:#1e283c">59.80</div>
<div class="t" style="left:185px;width:52px;text-align:right;top:35.22px;font-size:10.5px;color:#1e283c">+1</div>
<div class="t" style="left:19px;width:51px;text-align:right;top:51.08px;font-size:10.5px;color:#1e283c">-23.56</div>
<div class="t" style="left:74px;width:51px;text-align:right;top:51.08px;font-size:10.5px;color:#1e283c">55.70</div>
<div class="t" style="left:185px;width:52px;text-align:right;top:51.08px;font-size:10.5px;color:#1e283c">-1</div>
<div class="t" style="left:19px;width:51px;text-align:right;top:66.94px;font-size:10.5px;color:#1e283c">-21.98</div>
<div class="t" style="left:19px;width:51px;text-align:right;top:82.80px;font-size:10.5px;color:#1e283c">-20.51</div>
<div class="t" style="left:19px;width:51px;text-align:right;top:98.66px;font-size:10.5px;color:#1e283c">-19.14</div>
<div class="t" style="left:19px;width:51px;text-align:right;top:114.52px;font-size:10.5px;color:#1e283c">-17.87</div>
<div class="t" style="left:19px;width:51px;text-align:right;top:130.38px;font-size:10.5px;color:#1e283c">-16.68</div>
<div class="t" style="left:19px;width:51px;text-align:right;top:146.24px;font-size:10.5px;color:#1e283c">-15.57</div>
<div class="t" style="left:19px;width:51px;text-align:right;top:162.10px;font-size:10.5px;color:#1e283c">-14.55</div>
<div class="t" style="left:19px;width:51px;text-align:right;top:177.96px;font-size:10.5px;color:#1e283c">-13.60</div>
<div class="t" style="left:74px;width:51px;text-align:right;top:177.96px;font-size:10.5px;color:#1e283c">32.15</div>
<div class="t" style="left:185px;width:52px;text-align:right;top:177.96px;font-size:10.5px;color:#1e283c">-4</div>
<div class="t" style="left:19px;width:51px;text-align:right;top:193.82px;font-size:10.5px;color:#1e283c">-12.70</div>
<div class="t" style="left:19px;width:51px;text-align:right;top:209.68px;font-size:10.5px;color:#1e283c">-11.88</div>
<div class="t" style="left:19px;width:51px;text-align:right;top:225.54px;font-size:10.5px;color:#1e283c">-11.12</div>
<div class="t" style="left:19px;width:51px;text-align:right;top:241.40px;font-size:10.5px;color:#1e283c">-10.39</div>
<div class="t" style="left:74px;width:51px;text-align:right;top:241.40px;font-size:10.5px;color:#1e283c">24.70</div>
<div class="t" style="left:185px;width:52px;text-align:right;top:241.40px;font-size:10.5px;color:#1e283c">+4</div>
<div class="t" style="left:19px;width:51px;text-align:right;top:257.26px;font-size:10.5px;color:#1e283c">-9.73</div>
<div class="t" style="left:19px;width:51px;text-align:right;top:273.12px;font-size:10.5px;color:#1e283c">-9.59</div>
</div>
<div class="r" style="left:226px;top:306px;width:279px;height:285px;background:#d6dbe8;border:1px solid #aab3c4;box-sizing:border-box;"></div>
<div class="r" style="left:227px;top:307px;width:263px;height:283px;overflow:hidden;">
<div class="r" style="left:0px;top:0px;width:263px;height:17px;background:#f3f6fb;"></div>
<div class="r" style="left:0px;top:17.0px;width:263px;height:15.86px;background:#a7bfdd;"></div>
<div class="r" style="left:0px;top:31.86px;width:263px;height:1px;background:#c5cfde;"></div>
<div class="r" style="left:0px;top:32.86px;width:263px;height:15.86px;background:#a7bfdd;"></div>
<div class="r" style="left:0px;top:47.72px;width:263px;height:1px;background:#c5cfde;"></div>
<div class="r" style="left:0px;top:48.72px;width:263px;height:15.86px;background:#a7bfdd;"></div>
<div class="r" style="left:0px;top:63.58px;width:263px;height:1px;background:#c5cfde;"></div>
<div class="r" style="left:0px;top:64.58px;width:263px;height:15.86px;background:#a7bfdd;"></div>
<div class="r" style="left:0px;top:79.44px;width:263px;height:1px;background:#c5cfde;"></div>
<div class="r" style="left:0px;top:80.44px;width:263px;height:15.86px;background:#a7bfdd;"></div>
<div class="r" style="left:0px;top:95.3px;width:263px;height:1px;background:#c5cfde;"></div>
<div class="r" style="left:0px;top:96.3px;width:263px;height:15.86px;background:#a7bfdd;"></div>
<div class="r" style="left:0px;top:111.16px;width:263px;height:1px;background:#c5cfde;"></div>
<div class="r" style="left:0px;top:112.16px;width:263px;height:15.86px;background:#a7bfdd;"></div>
<div class="r" style="left:0px;top:127.01999999999998px;width:263px;height:1px;background:#c5cfde;"></div>
<div class="r" style="left:0px;top:128.01999999999998px;width:263px;height:15.86px;background:#a7bfdd;"></div>
<div class="r" style="left:0px;top:142.88px;width:263px;height:1px;background:#c5cfde;"></div>
<div class="r" style="left:0px;top:143.88px;width:263px;height:15.86px;background:#c8e4e9;"></div>
<div class="r" style="left:0px;top:158.74px;width:263px;height:1px;background:#c5cfde;"></div>
<div class="r" style="left:0px;top:159.74px;width:263px;height:15.86px;background:#c8e4e9;"></div>
<div class="r" style="left:0px;top:174.6px;width:263px;height:1px;background:#c5cfde;"></div>
<div class="r" style="left:0px;top:175.6px;width:263px;height:15.86px;background:#c8e4e9;"></div>
<div class="r" style="left:0px;top:190.45999999999998px;width:263px;height:1px;background:#c5cfde;"></div>
<div class="r" style="left:0px;top:191.45999999999998px;width:263px;height:15.86px;background:#c8e4e9;"></div>
<div class="r" style="left:0px;top:206.32px;width:263px;height:1px;background:#c5cfde;"></div>
<div class="r" style="left:0px;top:207.32px;width:263px;height:15.86px;background:#c8e4e9;"></div>
<div class="r" style="left:0px;top:222.18px;width:263px;height:1px;background:#c5cfde;"></div>
<div class="r" style="left:0px;top:223.18px;width:263px;height:15.86px;background:#c8e4e9;"></div>
<div class="r" style="left:0px;top:238.04px;width:263px;height:1px;background:#c5cfde;"></div>
<div class="r" style="left:0px;top:239.04px;width:263px;height:15.86px;background:#c8e4e9;"></div>
<div class="r" style="left:0px;top:253.89999999999998px;width:263px;height:1px;background:#c5cfde;"></div>
<div class="r" style="left:0px;top:254.89999999999998px;width:263px;height:15.86px;background:#c8e4e9;"></div>
<div class="r" style="left:0px;top:269.76px;width:263px;height:1px;background:#c5cfde;"></div>
<div class="r" style="left:0px;top:270.76px;width:263px;height:15.86px;background:#c8e4e9;"></div>
<div class="r" style="left:0px;top:285.62px;width:263px;height:1px;background:#c5cfde;"></div>
<div class="r" style="left:0px;top:16px;width:263px;height:1px;background:#c9d1de;"></div>
<div class="r" style="left:51px;top:0px;width:1px;height:283px;background:#c9d1de;"></div>
<div class="r" style="left:103px;top:0px;width:1px;height:283px;background:#c9d1de;"></div>
<div class="r" style="left:156px;top:0px;width:1px;height:283px;background:#c9d1de;"></div>
<div class="r" style="left:208px;top:0px;width:1px;height:283px;background:#c9d1de;"></div>
<div class="r" style="left:262px;top:0px;width:1px;height:283px;background:#c9d1de;"></div>
<div class="t" style="left:-174.0px;width:400px;text-align:center;top:2.49px;font-size:10.5px;color:#1e283c;font-weight:normal;">Mid</div>
<div class="t" style="left:-122.0px;width:400px;text-align:center;top:2.49px;font-size:10.5px;color:#1e283c;font-weight:normal;">Delta</div>
<div class="t" style="left:-69.5px;width:400px;text-align:center;top:2.49px;font-size:10.5px;color:#1e283c;font-weight:normal;">OrigPrice</div>
<div class="t" style="left:-17.0px;width:400px;text-align:center;top:2.49px;font-size:10.5px;color:#1e283c;font-weight:normal;">Model</div>
<div class="t" style="left:36.0px;width:400px;text-align:center;top:2.49px;font-size:10.5px;color:#1e283c;font-weight:normal;">Pos</div>
<div class="t" style="left:0px;width:48px;text-align:right;top:19.36px;font-size:10.5px;color:#1e283c">80.85</div>
<div class="t" style="left:52px;width:48px;text-align:right;top:19.36px;font-size:10.5px;color:#1e283c">-28.72</div>
<div class="t" style="left:0px;width:48px;text-align:right;top:35.22px;font-size:10.5px;color:#1e283c">76.10</div>
<div class="t" style="left:52px;width:48px;text-align:right;top:35.22px;font-size:10.5px;color:#1e283c">-27.07</div>
<div class="t" style="left:0px;width:48px;text-align:right;top:51.08px;font-size:10.5px;color:#1e283c">71.70</div>
<div class="t" style="left:52px;width:48px;text-align:right;top:51.08px;font-size:10.5px;color:#1e283c">-25.52</div>
<div class="t" style="left:0px;width:48px;text-align:right;top:66.94px;font-size:10.5px;color:#1e283c">67.60</div>
<div class="t" style="left:52px;width:48px;text-align:right;top:66.94px;font-size:10.5px;color:#1e283c">-24.07</div>
<div class="t" style="left:0px;width:48px;text-align:right;top:82.80px;font-size:10.5px;color:#1e283c">63.75</div>
<div class="t" style="left:52px;width:48px;text-align:right;top:82.80px;font-size:10.5px;color:#1e283c">-22.69</div>
<div class="t" style="left:0px;width:48px;text-align:right;top:98.66px;font-size:10.5px;color:#1e283c">60.15</div>
<div class="t" style="left:52px;width:48px;text-align:right;top:98.66px;font-size:10.5px;color:#1e283c">-21.41</div>
<div class="t" style="left:0px;width:48px;text-align:right;top:114.52px;font-size:10.5px;color:#1e283c">56.85</div>
<div class="t" style="left:52px;width:48px;text-align:right;top:114.52px;font-size:10.5px;color:#1e283c">-20.21</div>
<div class="t" style="left:0px;width:48px;text-align:right;top:130.38px;font-size:10.5px;color:#1e283c">53.65</div>
<div class="t" style="left:52px;width:48px;text-align:right;top:130.38px;font-size:10.5px;color:#1e283c">-19.06</div>
<div class="t" style="left:0px;width:48px;text-align:right;top:146.24px;font-size:10.5px;color:#1e283c">50.75</div>
<div class="t" style="left:52px;width:48px;text-align:right;top:146.24px;font-size:10.5px;color:#1e283c">-18.00</div>
<div class="t" style="left:0px;width:48px;text-align:right;top:162.10px;font-size:10.5px;color:#1e283c">47.90</div>
<div class="t" style="left:52px;width:48px;text-align:right;top:162.10px;font-size:10.5px;color:#1e283c">-16.98</div>
<div class="t" style="left:0px;width:48px;text-align:right;top:177.96px;font-size:10.5px;color:#1e283c">45.30</div>
<div class="t" style="left:52px;width:48px;text-align:right;top:177.96px;font-size:10.5px;color:#1e283c">-16.04</div>
<div class="t" style="left:0px;width:48px;text-align:right;top:193.82px;font-size:10.5px;color:#1e283c">42.80</div>
<div class="t" style="left:52px;width:48px;text-align:right;top:193.82px;font-size:10.5px;color:#1e283c">-15.14</div>
<div class="t" style="left:0px;width:48px;text-align:right;top:209.68px;font-size:10.5px;color:#1e283c">40.50</div>
<div class="t" style="left:52px;width:48px;text-align:right;top:209.68px;font-size:10.5px;color:#1e283c">-14.30</div>
<div class="t" style="left:0px;width:48px;text-align:right;top:225.54px;font-size:10.5px;color:#1e283c">38.30</div>
<div class="t" style="left:52px;width:48px;text-align:right;top:225.54px;font-size:10.5px;color:#1e283c">-13.50</div>
<div class="t" style="left:0px;width:48px;text-align:right;top:241.40px;font-size:10.5px;color:#1e283c">36.25</div>
<div class="t" style="left:52px;width:48px;text-align:right;top:241.40px;font-size:10.5px;color:#1e283c">-12.76</div>
<div class="t" style="left:0px;width:48px;text-align:right;top:257.26px;font-size:10.5px;color:#1e283c">34.35</div>
<div class="t" style="left:52px;width:48px;text-align:right;top:257.26px;font-size:10.5px;color:#1e283c">-12.06</div>
<div class="t" style="left:0px;width:48px;text-align:right;top:273.12px;font-size:10.5px;color:#1e283c">32.45</div>
<div class="t" style="left:52px;width:48px;text-align:right;top:273.12px;font-size:10.5px;color:#1e283c">-11.38</div>
</div>
<div class="r" style="left:490px;top:307px;width:14px;height:17px;background:#f3f6fb;"></div>
<div class="r" style="left:489px;top:307px;width:1px;height:284px;background:#c9d1de;"></div>
<div class="r" style="left:490px;top:324px;width:14px;height:266px;background:#d0d6e2;"></div>
<div class="r" style="left:492px;top:423px;width:9px;height:19px;background:#9aa5b8;"></div>
<svg style="left:494px;top:330px" width="7" height="5"><path d="M0.5 4.5 L3.5 0.5 L6.5 4.5 Z" fill="#404a5c"/></svg>
<svg style="left:494px;top:582px" width="7" height="5"><path d="M0.5 0.5 L3.5 4.5 L6.5 0.5 Z" fill="#404a5c"/></svg>
<div class="r" style="left:-2px;top:603px;width:95px;height:17px;background:#ffffff;border:1px solid #b3bccd;box-sizing:border-box;"></div>
<div class="t" style="left:-3px;top:605.49px;font-size:10.5px;color:#1e283c;font-weight:normal;">ed</div>
<svg style="left:84px;top:609px" width="6" height="4"><path d="M0 0 H6 L3 3.5 Z" fill="#5a6478"/></svg>
<div class="r" style="left:100px;top:603px;width:69px;height:17px;background:#ffffff;border:1px solid #b3bccd;box-sizing:border-box;"></div>
<div class="t" style="left:104px;top:605.49px;font-size:10.5px;color:#1e283c;font-weight:normal;">Auto</div>
<svg style="left:159px;top:609px" width="6" height="4"><path d="M0 0 H6 L3 3.5 Z" fill="#5a6478"/></svg>
<div class="r" style="left:386px;top:604px;width:10px;height:10px;background:#ffffff;border:1px solid #9aa3b5;box-sizing:border-box;"></div>
<div class="t" style="left:399px;top:604.49px;font-size:10.5px;color:#1e283c;font-weight:normal;">Ignore Today&#39;s Trades</div>
<div class="r" style="left:-20px;top:623px;width:525px;height:49.5px;overflow:hidden;">
<div class="r" style="left:0px;top:0px;width:525px;height:17.5px;background:#f3f6fb;"></div>
<div class="r" style="left:0px;top:17.5px;width:525px;height:16px;background:#ffffff;"></div>
<div class="r" style="left:0px;top:32.5px;width:525px;height:1px;background:#c9d1de;"></div>
<div class="r" style="left:0px;top:33.5px;width:525px;height:16px;background:#ffffff;"></div>
<div class="r" style="left:0px;top:48.5px;width:525px;height:1px;background:#c9d1de;"></div>
<div class="r" style="left:0px;top:16.5px;width:525px;height:1px;background:#c9d1de;"></div>
<div class="r" style="left:49px;top:0px;width:1px;height:49.5px;background:#c9d1de;"></div>
<div class="r" style="left:96px;top:0px;width:1px;height:49.5px;background:#c9d1de;"></div>
<div class="r" style="left:144px;top:0px;width:1px;height:49.5px;background:#c9d1de;"></div>
<div class="r" style="left:191px;top:0px;width:1px;height:49.5px;background:#c9d1de;"></div>
<div class="r" style="left:238px;top:0px;width:1px;height:49.5px;background:#c9d1de;"></div>
<div class="r" style="left:285px;top:0px;width:1px;height:49.5px;background:#c9d1de;"></div>
<div class="r" style="left:334px;top:0px;width:1px;height:49.5px;background:#c9d1de;"></div>
<div class="r" style="left:381px;top:0px;width:1px;height:49.5px;background:#c9d1de;"></div>
<div class="r" style="left:429px;top:0px;width:1px;height:49.5px;background:#c9d1de;"></div>
<div class="r" style="left:476px;top:0px;width:1px;height:49.5px;background:#c9d1de;"></div>
<div class="r" style="left:524px;top:0px;width:1px;height:49.5px;background:#c9d1de;"></div>
<div class="t" style="left:-175.0px;width:400px;text-align:center;top:2.99px;font-size:10.5px;color:#1e283c;font-weight:normal;">Cost</div>
<div class="t" style="left:-126.5px;width:400px;text-align:center;top:2.99px;font-size:10.5px;color:#1e283c;font-weight:normal;">Curr C...</div>
<div class="t" style="left:-79.0px;width:400px;text-align:center;top:2.99px;font-size:10.5px;color:#1e283c;font-weight:normal;">Commi...</div>
<div class="t" style="left:-31.5px;width:400px;text-align:center;top:2.99px;font-size:10.5px;color:#1e283c;font-weight:normal;">PnL</div>
<div class="t" style="left:15.5px;width:400px;text-align:center;top:2.99px;font-size:10.5px;color:#1e283c;font-weight:normal;">PnL%</div>
<div class="t" style="left:62.5px;width:400px;text-align:center;top:2.99px;font-size:10.5px;color:#1e283c;font-weight:normal;">Delta</div>
<div class="t" style="left:110.5px;width:400px;text-align:center;top:2.99px;font-size:10.5px;color:#1e283c;font-weight:normal;">Gamma</div>
<div class="t" style="left:158.5px;width:400px;text-align:center;top:2.99px;font-size:10.5px;color:#1e283c;font-weight:normal;">Theta</div>
<div class="t" style="left:206.0px;width:400px;text-align:center;top:2.99px;font-size:10.5px;color:#1e283c;font-weight:normal;">Vega</div>
<div class="t" style="left:253.5px;width:400px;text-align:center;top:2.99px;font-size:10.5px;color:#1e283c;font-weight:normal;">T/D</div>
<div class="t" style="left:301.0px;width:400px;text-align:center;top:2.99px;font-size:10.5px;color:#1e283c;font-weight:normal;">Plot</div>
<div class="t" style="left:0px;width:46px;text-align:right;top:20.00px;font-size:10.5px;color:#1e283c">564.00</div>
<div class="t" style="left:50px;width:43px;text-align:right;top:20.00px;font-size:10.5px;color:#1e283c">-2,570....</div>
<div class="t" style="left:97px;width:44px;text-align:right;top:20.00px;font-size:10.5px;color:#1e283c">6.00</div>
<div class="t" style="left:145px;width:43px;text-align:right;top:20.00px;font-size:10.5px;color:#e8262a">-6.00</div>
<div class="t" style="left:192px;width:43px;text-align:right;top:20.00px;font-size:10.5px;color:#e8262a">-0.02%</div>
<div class="t" style="left:239px;width:43px;text-align:right;top:20.00px;font-size:10.5px;color:#1e283c">11.14</div>
<div class="t" style="left:286px;width:45px;text-align:right;top:20.00px;font-size:10.5px;color:#1e283c">-0.04</div>
<div class="t" style="left:335px;width:43px;text-align:right;top:20.00px;font-size:10.5px;color:#1e283c">40.74</div>
<div class="t" style="left:382px;width:44px;text-align:right;top:20.00px;font-size:10.5px;color:#1e283c">-308.14</div>
<div class="t" style="left:430px;width:43px;text-align:right;top:20.00px;font-size:10.5px;color:#1e283c">3.7</div>
<div class="t" style="left:239px;width:43px;text-align:right;top:36.00px;font-size:10.5px;color:#1e283c">0.00</div>
<div class="t" style="left:286px;width:45px;text-align:right;top:36.00px;font-size:10.5px;color:#1e283c">0.00</div>
<div class="t" style="left:335px;width:43px;text-align:right;top:36.00px;font-size:10.5px;color:#1e283c">0.00</div>
<div class="t" style="left:382px;width:44px;text-align:right;top:36.00px;font-size:10.5px;color:#1e283c">0.00</div>
<div class="t" style="left:430px;width:43px;text-align:right;top:36.00px;font-size:10.5px;color:#1e283c">0</div>
</div>
<div class="r" style="left:-20px;top:623px;width:525px;height:49px;background:none;border:1px solid #c9d1de;box-sizing:border-box;"></div>
<svg style="left:476px;top:644px" width="11" height="11"><rect x="0.5" y="0.5" width="10" height="10" fill="#fff" stroke="#a0a8b8"/><path d="M2.5 5.5 L4.5 7.5 L8.5 2.5" stroke="#5a6478" stroke-width="1.2" fill="none"/></svg>
<svg style="left:476px;top:660px" width="11" height="11"><rect x="0.5" y="0.5" width="10" height="10" fill="#fff" stroke="#a0a8b8"/><path d="M2.5 5.5 L4.5 7.5 L8.5 2.5" stroke="#5a6478" stroke-width="1.2" fill="none"/></svg>
<div class="r" style="left:0px;top:672px;width:515px;height:3px;background:#c0c6d2;"></div>
<div class="r" style="left:514px;top:136px;width:1px;height:539px;background:#a8b0c0;"></div>
<div class="r" style="left:515px;top:138px;width:64px;height:23px;background:#dde2ec;border:1px solid #b0b8c8;box-sizing:border-box;border-bottom:none;"></div>
<div class="t" style="left:346.5px;width:400px;text-align:center;top:143.94px;font-size:10px;color:#1e283c;font-weight:normal;">Risk Chart</div>
<div class="r" style="left:578px;top:160px;width:502px;height:1px;background:#b0b8c8;"></div>
<div class="r" style="left:578px;top:138px;width:68px;height:22px;background:#cfd5e2;border:1px solid #b0b8c8;box-sizing:border-box;"></div>
<div class="t" style="left:412.0px;width:400px;text-align:center;top:143.94px;font-size:10px;color:#1e283c;font-weight:normal;">Price Chart</div>
<div class="r" style="left:645px;top:138px;width:107px;height:22px;background:#cfd5e2;border:1px solid #b0b8c8;box-sizing:border-box;"></div>
<div class="t" style="left:498.5px;width:400px;text-align:center;top:143.94px;font-size:10px;color:#1e283c;font-weight:normal;">Movement Analysis</div>
<div class="r" style="left:751px;top:138px;width:56px;height:22px;background:#cfd5e2;border:1px solid #b0b8c8;box-sizing:border-box;"></div>
<div class="t" style="left:579.0px;width:400px;text-align:center;top:143.94px;font-size:10px;color:#1e283c;font-weight:normal;">Volatility</div>
<div class="r" style="left:806px;top:138px;width:135px;height:22px;background:#cfd5e2;border:1px solid #b0b8c8;box-sizing:border-box;"></div>
<div class="t" style="left:673.5px;width:400px;text-align:center;top:143.94px;font-size:10px;color:#1e283c;font-weight:normal;">Statistics &amp; Fundamentals</div>
<div class="r" style="left:515px;top:161px;width:565px;height:21px;background:#d6dbe8;"></div>
<div class="t" style="left:519.5px;top:165.94px;font-size:10px;color:#1e283c;font-weight:normal;">Vol Adjust</div>
<div class="r" style="left:568px;top:163px;width:46px;height:16px;background:#ffffff;border:1px solid #b3bccd;box-sizing:border-box;"></div>
<div class="t" style="right:482px;top:165.49px;font-size:10.5px;color:#1e283c;font-weight:normal;">0</div>
<svg style="left:603px;top:165px" width="7" height="12"><path d="M0.5 4 L3.5 1 L6.5 4 Z M0.5 8 L3.5 11 L6.5 8 Z" fill="#404a5c"/></svg>
<div class="t" style="left:992.5px;top:165.94px;font-size:10px;color:#1e283c;font-weight:normal;">Projection</div>
<div class="r" style="left:1040px;top:163px;width:45px;height:17px;background:#ffffff;border:1px solid #b3bccd;box-sizing:border-box;"></div>
<div class="t" style="left:1043px;top:165.49px;font-size:10.5px;color:#1e283c;font-weight:normal;">22/07/2025</div>
<div class="r" style="left:515px;top:182px;width:565px;height:308px;background:#ffffff;"></div>
<div class="r" style="left:515px;top:490px;width:565px;height:162px;background:#ffffff;"></div>
<svg style="left:0;top:0" width="1080" height="675" viewBox="0 0 1080 675">
<defs><clipPath id="plot"><rect x="562" y="197" width="518" height="275"/></clipPath></defs>
<line x1="589.5" y1="197" x2="589.5" y2="471.1" stroke="#e6e6e6" stroke-width="1"/>
<line x1="636.5" y1="197" x2="636.5" y2="471.1" stroke="#e6e6e6" stroke-width="1"/>
<line x1="683.5" y1="197" x2="683.5" y2="471.1" stroke="#e6e6e6" stroke-width="1"/>
<line x1="729.5" y1="197" x2="729.5" y2="471.1" stroke="#e6e6e6" stroke-width="1"/>
<line x1="776.5" y1="197" x2="776.5" y2="471.1" stroke="#e6e6e6" stroke-width="1"/>
<line x1="823.5" y1="197" x2="823.5" y2="471.1" stroke="#e6e6e6" stroke-width="1"/>
<line x1="870.5" y1="197" x2="870.5" y2="471.1" stroke="#e6e6e6" stroke-width="1"/>
<line x1="917.5" y1="197" x2="917.5" y2="471.1" stroke="#e6e6e6" stroke-width="1"/>
<line x1="963.5" y1="197" x2="963.5" y2="471.1" stroke="#e6e6e6" stroke-width="1"/>
<line x1="1010.5" y1="197" x2="1010.5" y2="471.1" stroke="#e6e6e6" stroke-width="1"/>
<line x1="1057.5" y1="197" x2="1057.5" y2="471.1" stroke="#e6e6e6" stroke-width="1"/>
<line x1="562" y1="197.5" x2="1080" y2="197.5" stroke="#e6e6e6" stroke-width="1"/>
<line x1="562" y1="219.5" x2="1080" y2="219.5" stroke="#e6e6e6" stroke-width="1"/>
<line x1="562" y1="242.5" x2="1080" y2="242.5" stroke="#e6e6e6" stroke-width="1"/>
<line x1="562" y1="265.5" x2="1080" y2="265.5" stroke="#e6e6e6" stroke-width="1"/>
<line x1="562" y1="288.5" x2="1080" y2="288.5" stroke="#e6e6e6" stroke-width="1"/>
<line x1="562" y1="311.5" x2="1080" y2="311.5" stroke="#e6e6e6" stroke-width="1"/>
<line x1="562" y1="334.5" x2="1080" y2="334.5" stroke="#e6e6e6" stroke-width="1"/>
<line x1="562" y1="356.5" x2="1080" y2="356.5" stroke="#e6e6e6" stroke-width="1"/>
<line x1="562" y1="379.5" x2="1080" y2="379.5" stroke="#e6e6e6" stroke-width="1"/>
<line x1="562" y1="402.5" x2="1080" y2="402.5" stroke="#e6e6e6" stroke-width="1"/>
<line x1="562" y1="425.5" x2="1080" y2="425.5" stroke="#e6e6e6" stroke-width="1"/>
<line x1="562" y1="448.5" x2="1080" y2="448.5" stroke="#e6e6e6" stroke-width="1"/>
<line x1="562" y1="471.5" x2="1080" y2="471.5" stroke="#e6e6e6" stroke-width="1"/>
<rect x="930" y="197" width="150" height="274.1" fill="#92cddc"/>
<rect x="973.5" y="197" width="85.5" height="274.1" fill="#4e80bd"/>
<line x1="963.5" y1="197" x2="963.5" y2="471.1" stroke="#ffffff" stroke-opacity="0.3" stroke-width="1"/>
<line x1="1010.5" y1="197" x2="1010.5" y2="471.1" stroke="#ffffff" stroke-opacity="0.3" stroke-width="1"/>
<line x1="1057.5" y1="197" x2="1057.5" y2="471.1" stroke="#ffffff" stroke-opacity="0.3" stroke-width="1"/>
<line x1="930" y1="197.5" x2="1080" y2="197.5" stroke="#ffffff" stroke-opacity="0.3" stroke-width="1"/>
<line x1="930" y1="219.5" x2="1080" y2="219.5" stroke="#ffffff" stroke-opacity="0.3" stroke-width="1"/>
<line x1="930" y1="242.5" x2="1080" y2="242.5" stroke="#ffffff" stroke-opacity="0.3" stroke-width="1"/>
<line x1="930" y1="265.5" x2="1080" y2="265.5" stroke="#ffffff" stroke-opacity="0.3" stroke-width="1"/>
<line x1="930" y1="288.5" x2="1080" y2="288.5" stroke="#ffffff" stroke-opacity="0.3" stroke-width="1"/>
<line x1="930" y1="311.5" x2="1080" y2="311.5" stroke="#ffffff" stroke-opacity="0.3" stroke-width="1"/>
<line x1="930" y1="334.5" x2="1080" y2="334.5" stroke="#ffffff" stroke-opacity="0.3" stroke-width="1"/>
<line x1="930" y1="356.5" x2="1080" y2="356.5" stroke="#ffffff" stroke-opacity="0.3" stroke-width="1"/>
<line x1="930" y1="379.5" x2="1080" y2="379.5" stroke="#ffffff" stroke-opacity="0.3" stroke-width="1"/>
<line x1="930" y1="402.5" x2="1080" y2="402.5" stroke="#ffffff" stroke-opacity="0.3" stroke-width="1"/>
<line x1="930" y1="425.5" x2="1080" y2="425.5" stroke="#ffffff" stroke-opacity="0.3" stroke-width="1"/>
<line x1="930" y1="448.5" x2="1080" y2="448.5" stroke="#ffffff" stroke-opacity="0.3" stroke-width="1"/>
<line x1="930" y1="471.5" x2="1080" y2="471.5" stroke="#ffffff" stroke-opacity="0.3" stroke-width="1"/>
<line x1="562.5" y1="197" x2="562.5" y2="471.1" stroke="#c8c8c8" stroke-width="1"/>
<text x="941" y="200" transform="rotate(-90 941 200)" text-anchor="end" font-family="Liberation Sans" font-size="9" fill="#5b8fc8">6214.02</text>
<text x="984" y="200" transform="rotate(-90 984 200)" text-anchor="end" font-family="Liberation Sans" font-size="9" fill="#a0c0e8">6259.81</text>
<text x="1056" y="200" transform="rotate(-90 1056 200)" text-anchor="end" font-family="Liberation Sans" font-size="9" fill="#5b8fc8">6351.39</text>
<line x1="562" y1="265.5" x2="1080" y2="265.5" stroke="#202020" stroke-width="1"/>
<g clip-path="url(#plot)"><polyline points="562.0,401.8 566.0,399.5 570.0,397.2 574.0,394.9 578.0,392.7 582.0,390.5 586.0,388.2 590.0,386.1 594.0,383.9 598.0,381.7 602.0,379.6 606.0,377.4 610.0,375.3 614.0,373.2 618.0,371.2 622.0,369.1 626.0,367.0 630.0,365.0 634.0,363.0 638.0,361.0 642.0,359.0 646.0,357.1 650.0,355.1 654.0,353.2 658.0,351.3 662.0,349.4 666.0,347.5 670.0,345.7 674.0,343.8 678.0,342.0 682.0,340.2 686.0,338.4 690.0,336.6 694.0,334.9 698.0,333.1 702.0,331.4 706.0,329.7 710.0,328.0 714.0,326.3 718.0,324.7 722.0,323.0 726.0,321.4 730.0,319.8 734.0,318.2 738.0,316.6 742.0,315.1 746.0,313.5 750.0,312.0 754.0,310.5 758.0,309.0 762.0,307.6 766.0,306.1 770.0,304.7 774.0,303.2 778.0,301.8 782.0,300.4 786.0,299.1 790.0,297.7 794.0,296.4 798.0,295.1 802.0,293.8 806.0,292.5 810.0,291.2 814.0,289.9 818.0,288.7 822.0,287.5 826.0,286.3 830.0,285.1 834.0,283.9 838.0,282.8 842.0,281.6 846.0,280.5 850.0,279.4 854.0,278.3 858.0,277.3 862.0,276.2 866.0,275.2 870.0,274.2 874.0,273.2 878.0,272.2 882.0,271.2 886.0,270.3 890.0,269.3 894.0,268.4 898.0,267.5 902.0,266.6 906.0,265.8 910.0,264.9 914.0,264.1 918.0,263.3 922.0,262.5 926.0,261.7 930.0,260.9 934.0,260.2 938.0,259.4 942.0,258.7 946.0,258.0 950.0,257.4 954.0,256.7 958.0,256.0 962.0,255.4 966.0,254.8 970.0,254.2 974.0,253.6 978.0,253.1 982.0,252.5 986.0,252.0 990.0,251.5 994.0,251.0 998.0,250.5 1002.0,250.0 1006.0,249.6 1010.0,249.2 1014.0,248.7 1018.0,248.3 1022.0,248.0 1026.0,247.6 1030.0,247.3 1034.0,246.9 1038.0,246.6 1042.0,246.3 1046.0,246.1 1050.0,245.8 1054.0,245.5 1058.0,245.3 1062.0,245.1 1066.0,244.9 1070.0,244.7 1074.0,244.6 1078.0,244.4 1082.0,244.3 1086.0,244.2" fill="none" stroke="#f07070" stroke-width="1.2"/>
<polyline points="562.0,388.9 566.0,387.3 570.0,385.7 574.0,384.1 578.0,382.5 582.0,381.0 586.0,379.4 590.0,377.9 594.0,376.3 598.0,374.8 602.0,373.3 606.0,371.8 610.0,370.3 614.0,368.8 618.0,367.3 622.0,365.8 626.0,364.4 630.0,362.9 634.0,361.5 638.0,360.0 642.0,358.6 646.0,357.2 650.0,355.8 654.0,354.4 658.0,353.0 662.0,351.6 666.0,350.2 670.0,348.9 674.0,347.5 678.0,346.2 682.0,344.8 686.0,343.5 690.0,342.2 694.0,340.9 698.0,339.6 702.0,338.3 706.0,337.0 710.0,335.7 714.0,334.5 718.0,333.2 722.0,332.0 726.0,330.7 730.0,329.5 734.0,328.3 738.0,327.1 742.0,325.9 746.0,324.7 750.0,323.5 754.0,322.4 758.0,321.2 762.0,320.1 766.0,318.9 770.0,317.8 774.0,316.7 778.0,315.6 782.0,314.5 786.0,313.4 790.0,312.3 794.0,311.2 798.0,310.1 802.0,309.1 806.0,308.0 810.0,307.0" fill="none" stroke="#f07070" stroke-width="1.2"/>
<polyline points="808.0,307.5 812.0,306.5 816.0,305.5 820.0,304.4 824.0,303.4 828.0,302.4 832.0,301.5 836.0,300.5 840.0,299.5 844.0,298.5 848.0,297.6 852.0,296.7 856.0,295.7 860.0,294.8 864.0,293.9 868.0,293.0 872.0,292.1 876.0,291.2 880.0,290.3 884.0,289.5 888.0,288.6 892.0,287.8 896.0,286.9 900.0,286.1 904.0,285.3 908.0,284.5 912.0,283.7 916.0,282.9 920.0,282.1 924.0,281.3 928.0,280.5 932.0,279.8 936.0,279.0 940.0,278.3 944.0,277.6 948.0,276.9 952.0,276.1 956.0,275.4 960.0,274.8 964.0,274.1 968.0,273.4 972.0,272.7 976.0,272.1 980.0,271.4 984.0,270.8 988.0,270.2 992.0,269.6 996.0,269.0 1000.0,268.4 1004.0,267.8 1008.0,267.2 1012.0,266.6 1016.0,266.1 1020.0,265.5 1024.0,265.0 1028.0,264.4 1032.0,263.9 1036.0,263.4 1040.0,262.9 1044.0,262.4 1048.0,261.9 1052.0,261.4 1056.0,261.0 1060.0,260.5 1064.0,260.1 1068.0,259.6 1072.0,259.2 1076.0,258.8 1080.0,258.4 1084.0,258.0" fill="none" stroke="#8ab4ec" stroke-width="1.2"/>
<polyline points="560.5,453 613,208 800,208 823.5,236 1084,236" fill="none" stroke="#4a52c8" stroke-width="1.5"/></g>
<line x1="599.5" y1="197" x2="599.5" y2="471.1" stroke="#a040b0" stroke-width="1" stroke-dasharray="3 2.5"/>
<g transform="rotate(-10 1013 266)"><rect x="1000" y="263" width="25" height="6" fill="#c8a898" opacity="0.9"/></g>
<circle cx="1016.5" cy="266" r="3.2" fill="#d81818" stroke="#801010" stroke-width="0.6"/>
<text x="557" y="200.6" text-anchor="end" font-family="Liberation Sans" font-size="9" fill="#303030">17%</text>
<text x="557" y="223.4" text-anchor="end" font-family="Liberation Sans" font-size="9" fill="#303030">11%</text>
<text x="557" y="246.3" text-anchor="end" font-family="Liberation Sans" font-size="9" fill="#303030">6%</text>
<rect x="519.5" y="259.5" width="39" height="11" fill="#d40808"/>
<text x="557" y="269.1" text-anchor="end" font-family="Liberation Sans" font-size="9" fill="#ffffff">0%</text>
<text x="557" y="291.9" text-anchor="end" font-family="Liberation Sans" font-size="9" fill="#303030">-6%</text>
<text x="557" y="314.8" text-anchor="end" font-family="Liberation Sans" font-size="9" fill="#303030">-11%</text>
<text x="557" y="337.6" text-anchor="end" font-family="Liberation Sans" font-size="9" fill="#303030">-17%</text>
<text x="557" y="360.4" text-anchor="end" font-family="Liberation Sans" font-size="9" fill="#303030">-23%</text>
<text x="557" y="383.2" text-anchor="end" font-family="Liberation Sans" font-size="9" fill="#303030">-29%</text>
<text x="557" y="406.1" text-anchor="end" font-family="Liberation Sans" font-size="9" fill="#303030">-34%</text>
<text x="557" y="428.9" text-anchor="end" font-family="Liberation Sans" font-size="9" fill="#303030">-40%</text>
<text x="557" y="451.7" text-anchor="end" font-family="Liberation Sans" font-size="9" fill="#303030">-46%</text>
<text x="557" y="474.6" text-anchor="end" font-family="Liberation Sans" font-size="9" fill="#303030">-52%</text>
<text x="589.4" y="193" text-anchor="middle" font-family="Liberation Sans" font-size="9" fill="#303030">-7.2%</text>
<text x="589.4" y="484" text-anchor="middle" font-family="Liberation Sans" font-size="9" fill="#303030">5850</text>
<text x="636.2" y="193" text-anchor="middle" font-family="Liberation Sans" font-size="9" fill="#303030">-6.4%</text>
<text x="636.2" y="484" text-anchor="middle" font-family="Liberation Sans" font-size="9" fill="#303030">5900</text>
<text x="683.0" y="193" text-anchor="middle" font-family="Liberation Sans" font-size="9" fill="#303030">-5.6%</text>
<text x="683.0" y="484" text-anchor="middle" font-family="Liberation Sans" font-size="9" fill="#303030">5950</text>
<text x="729.8" y="193" text-anchor="middle" font-family="Liberation Sans" font-size="9" fill="#303030">-4.8%</text>
<text x="729.8" y="484" text-anchor="middle" font-family="Liberation Sans" font-size="9" fill="#303030">6000</text>
<text x="776.6" y="193" text-anchor="middle" font-family="Liberation Sans" font-size="9" fill="#303030">-4.1%</text>
<text x="776.6" y="484" text-anchor="middle" font-family="Liberation Sans" font-size="9" fill="#303030">6050</text>
<text x="823.4" y="193" text-anchor="middle" font-family="Liberation Sans" font-size="9" fill="#303030">-3.3%</text>
<text x="823.4" y="484" text-anchor="middle" font-family="Liberation Sans" font-size="9" fill="#303030">6100</text>
<text x="870.2" y="193" text-anchor="middle" font-family="Liberation Sans" font-size="9" fill="#303030">-2.5%</text>
<text x="870.2" y="484" text-anchor="middle" font-family="Liberation Sans" font-size="9" fill="#303030">6150</text>
<text x="917.0" y="193" text-anchor="middle" font-family="Liberation Sans" font-size="9" fill="#303030">-1.7%</text>
<text x="917.0" y="484" text-anchor="middle" font-family="Liberation Sans" font-size="9" fill="#303030">6200</text>
<text x="963.8" y="193" text-anchor="middle" font-family="Liberation Sans" font-size="9" fill="#303030">-0.9%</text>
<text x="963.8" y="484" text-anchor="middle" font-family="Liberation Sans" font-size="9" fill="#303030">6250</text>
<text x="1057.4" y="193" text-anchor="middle" font-family="Liberation Sans" font-size="9" fill="#303030">0.7%</text>
<text x="1057.4" y="484" text-anchor="middle" font-family="Liberation Sans" font-size="9" fill="#303030">6350</text>
<text x="1001" y="193" text-anchor="middle" font-family="Liberation Sans" font-size="9" fill="#303030">-</text>
<rect x="1003.5" y="182.5" width="25" height="10" fill="#eef2f8" stroke="#7a8290" stroke-width="1"/>
<text x="1016" y="191.5" text-anchor="middle" font-family="Liberation Sans" font-size="9" fill="#303030">0.0%</text>
<rect x="566.5" y="202.5" width="138" height="70" rx="4" fill="#e6ebf3" fill-opacity="0.86" stroke="#9ca6b6" stroke-width="1"/>
<rect x="573" y="209.0" width="3" height="10" fill="#e84848"/>
<text x="576.5" y="217.5" font-family="Liberation Sans" font-size="8.8" fill="#505050">-6.00 Realized PnL</text>
<rect x="573" y="220.8" width="3" height="10" fill="#7a9ae8"/>
<text x="576.5" y="229.3" font-family="Liberation Sans" font-size="8.8" fill="#505050">+4<tspan fill="#5a5ae8"> 05sep. 5775 Put &#916;</tspan></text>
<text x="700" y="229.3" text-anchor="end" font-family="Liberation Sans" font-size="8.8" fill="#5a5ae8">-10.39</text>
<rect x="573" y="232.6" width="3" height="10" fill="#7a9ae8"/>
<text x="576.5" y="241.1" font-family="Liberation Sans" font-size="8.8" fill="#505050">+1<tspan fill="#5a5ae8"> 05sep. 6100 Put &#916;</tspan></text>
<text x="700" y="241.1" text-anchor="end" font-family="Liberation Sans" font-size="8.8" fill="#5a5ae8">-25.25</text>
<rect x="573" y="244.4" width="3" height="10" fill="#7a9ae8"/>
<text x="576.5" y="252.9" font-family="Liberation Sans" font-size="8.8" fill="#505050">-4<tspan fill="#e86060"> 05sep. 5875 Put &#916;</tspan></text>
<text x="700" y="252.9" text-anchor="end" font-family="Liberation Sans" font-size="8.8" fill="#e86060">-13.60</text>
<rect x="573" y="256.2" width="3" height="10" fill="#7a9ae8"/>
<text x="576.5" y="264.7" font-family="Liberation Sans" font-size="8.8" fill="#505050">-1<tspan fill="#e86060"> 05sep. 6075 Put &#916;</tspan></text>
<text x="700" y="264.7" text-anchor="end" font-family="Liberation Sans" font-size="8.8" fill="#e86060">-23.56</text>
<rect x="567.5" y="420.5" width="95" height="46" rx="4" fill="#e6ebf3" fill-opacity="0.86" stroke="#9ca6b6" stroke-width="1"/>
<text x="573" y="436.0" font-family="Liberation Sans" font-size="8.8" fill="#6a6aee">05/09/2025 (0)</text>
<text x="573" y="447.5" font-family="Liberation Sans" font-size="8.8" fill="#ee6a6a">13/08/2025 (23) T+22</text>
<text x="573" y="459.0" font-family="Liberation Sans" font-size="8.8" fill="#8ab0ec">22/07/2025 (45) T+0</text>
<text x="597" y="470" transform="rotate(-90 597 470)" font-family="Liberation Sans" font-size="8.5" fill="#c080c8" opacity="0.6">5840.67</text>
<text x="570" y="464" font-family="Liberation Sans" font-size="9.5" font-weight="bold" fill="#9040a8">4.1%</text>
<text x="875" y="464" text-anchor="middle" font-family="Liberation Sans" font-size="9.5" fill="#9040a8">95.9%</text>
<rect x="1048.5" y="202.5" width="40" height="36" rx="4" fill="#e6ebf3" fill-opacity="0.72" stroke="#9ca6b6" stroke-width="1"/>
<text x="1055.5" y="215.5" font-family="Liberation Sans" font-size="10" font-weight="bold" fill="#3a4250">Comm</text>
<text x="1055.5" y="232" font-family="Liberation Sans" font-size="10" fill="#3a4250">Trade</text>
<rect x="518.5" y="490.5" width="580" height="158" rx="4" fill="#e8eef6" stroke="#a0aab8" stroke-width="1"/>
<text x="540" y="517" text-anchor="middle" font-family="Liberation Sans" font-size="9.2" fill="#6a6a6a">PnL</text>
<text x="540" y="553" text-anchor="middle" font-family="Liberation Sans" font-size="9.2" fill="#6a6a6a">Delta</text>
<text x="540" y="581" text-anchor="middle" font-family="Liberation Sans" font-size="9.2" fill="#6a6a6a">Gamma</text>
<text x="540" y="609" text-anchor="middle" font-family="Liberation Sans" font-size="9.2" fill="#6a6a6a">Theta</text>
<text x="540" y="636" text-anchor="middle" font-family="Liberation Sans" font-size="9.2" fill="#6a6a6a">Vega</text>
<rect x="563.0" y="513.5" width="50.5" height="9.0" fill="#f07878" stroke="#606060" stroke-width="0.8"/>
<text x="589.4" y="503.0" text-anchor="middle" font-family="Liberation Sans" font-size="9" font-weight="normal" fill="#f06868" opacity="1">-28%</text>
<text x="589.4" y="513.0" text-anchor="middle" font-family="Liberation Sans" font-size="9" font-weight="normal" fill="#f06868" opacity="1">-9947</text>
<rect x="563.0" y="541.3" width="50.5" height="8.4" fill="#5a78f4" stroke="#606060" stroke-width="0.8"/>
<text x="589.4" y="559.0" text-anchor="middle" font-family="Liberation Sans" font-size="9" font-weight="normal" fill="#6a78ee" opacity="1">32.71</text>
<rect x="563.0" y="577.5" width="50.5" height="7.2" fill="#f07878" stroke="#606060" stroke-width="0.8"/>
<text x="589.4" y="577.0" text-anchor="middle" font-family="Liberation Sans" font-size="9" font-weight="normal" fill="#f06868" opacity="1">-0.04</text>
<rect x="563.0" y="605.0" width="50.5" height="7.5" fill="#f07878" stroke="#606060" stroke-width="0.8"/>
<text x="589.4" y="604.5" text-anchor="middle" font-family="Liberation Sans" font-size="9" font-weight="normal" fill="#f06868" opacity="1">-36.34</text>
<rect x="563.0" y="632.5" width="50.5" height="3.4" fill="#f07878" stroke="#606060" stroke-width="0.8"/>
<text x="589.4" y="632.0" text-anchor="middle" font-family="Liberation Sans" font-size="9" font-weight="normal" fill="#f06868" opacity="1">-150.25</text>
<rect x="613.5" y="513.5" width="46.8" height="7.6" fill="#f07878" stroke="#606060" stroke-width="0.8"/>
<text x="636.2" y="503.0" text-anchor="middle" font-family="Liberation Sans" font-size="9" font-weight="normal" fill="#f06868" opacity="1">-24%</text>
<text x="636.2" y="513.0" text-anchor="middle" font-family="Liberation Sans" font-size="9" font-weight="normal" fill="#f06868" opacity="1">-8362</text>
<rect x="613.5" y="541.8" width="46.8" height="7.9" fill="#5a78f4" stroke="#606060" stroke-width="0.8"/>
<text x="636.2" y="559.0" text-anchor="middle" font-family="Liberation Sans" font-size="9" font-weight="normal" fill="#6a78ee" opacity="1">30.62</text>
<rect x="613.5" y="577.5" width="46.8" height="7.2" fill="#f07878" stroke="#606060" stroke-width="0.8"/>
<text x="636.2" y="577.0" text-anchor="middle" font-family="Liberation Sans" font-size="9" font-weight="normal" fill="#f06868" opacity="1">-0.04</text>
<rect x="613.5" y="605.0" width="46.8" height="3.7" fill="#f07878" stroke="#606060" stroke-width="0.8"/>
<text x="636.2" y="604.5" text-anchor="middle" font-family="Liberation Sans" font-size="9" font-weight="normal" fill="#f06868" opacity="1">-17.95</text>
<rect x="613.5" y="632.5" width="46.8" height="4.9" fill="#f07878" stroke="#606060" stroke-width="0.8"/>
<text x="636.2" y="632.0" text-anchor="middle" font-family="Liberation Sans" font-size="9" font-weight="normal" fill="#f06868" opacity="1">-216.66</text>
<rect x="660.3" y="513.5" width="47.1" height="6.2" fill="#f07878" stroke="#606060" stroke-width="0.8"/>
<text x="683.0" y="503.0" text-anchor="middle" font-family="Liberation Sans" font-size="9" font-weight="normal" fill="#f06868" opacity="1">-20%</text>
<text x="683.0" y="513.0" text-anchor="middle" font-family="Liberation Sans" font-size="9" font-weight="normal" fill="#f06868" opacity="1">-6889</text>
<rect x="660.3" y="542.4" width="47.1" height="7.3" fill="#5a78f4" stroke="#606060" stroke-width="0.8"/>
<text x="683.0" y="559.0" text-anchor="middle" font-family="Liberation Sans" font-size="9" font-weight="normal" fill="#6a78ee" opacity="1">28.27</text>
<rect x="660.3" y="577.5" width="47.1" height="9.0" fill="#f07878" stroke="#606060" stroke-width="0.8"/>
<text x="683.0" y="577.0" text-anchor="middle" font-family="Liberation Sans" font-size="9" font-weight="normal" fill="#f06868" opacity="1">-0.05</text>
<rect x="660.3" y="605.0" width="47.1" height="0.4" fill="#f07878" stroke="#606060" stroke-width="0.8"/>
<text x="683.0" y="604.5" text-anchor="middle" font-family="Liberation Sans" font-size="9" font-weight="normal" fill="#f06868" opacity="1">-1.70</text>
<rect x="660.3" y="632.5" width="47.1" height="6.1" fill="#f07878" stroke="#606060" stroke-width="0.8"/>
<text x="683.0" y="632.0" text-anchor="middle" font-family="Liberation Sans" font-size="9" font-weight="normal" fill="#f06868" opacity="1">-270.70</text>
<rect x="707.4" y="513.5" width="46.8" height="5.0" fill="#f07878" stroke="#606060" stroke-width="0.8"/>
<text x="729.8" y="503.0" text-anchor="middle" font-family="Liberation Sans" font-size="9" font-weight="normal" fill="#f06868" opacity="1">-16%</text>
<text x="729.8" y="513.0" text-anchor="middle" font-family="Liberation Sans" font-size="9" font-weight="normal" fill="#f06868" opacity="1">-5537</text>
<rect x="707.4" y="543.1" width="46.8" height="6.6" fill="#5a78f4" stroke="#606060" stroke-width="0.8"/>
<text x="729.8" y="559.0" text-anchor="middle" font-family="Liberation Sans" font-size="9" font-weight="normal" fill="#6a78ee" opacity="1">25.76</text>
<rect x="707.4" y="577.5" width="46.8" height="9.0" fill="#f07878" stroke="#606060" stroke-width="0.8"/>
<text x="729.8" y="577.0" text-anchor="middle" font-family="Liberation Sans" font-size="9" font-weight="normal" fill="#f06868" opacity="1">-0.05</text>
<rect x="707.4" y="602.4" width="46.8" height="2.6" fill="#5a78f4" stroke="#606060" stroke-width="0.8"/>
<text x="729.8" y="613.5" text-anchor="middle" font-family="Liberation Sans" font-size="9" font-weight="normal" fill="#6a78ee" opacity="1">12.02</text>
<rect x="707.4" y="632.5" width="46.8" height="7.0" fill="#f07878" stroke="#606060" stroke-width="0.8"/>
<text x="729.8" y="632.0" text-anchor="middle" font-family="Liberation Sans" font-size="9" font-weight="normal" fill="#f06868" opacity="1">-311.40</text>
<rect x="754.2" y="513.5" width="46.9" height="3.9" fill="#f07878" stroke="#606060" stroke-width="0.8"/>
<text x="776.6" y="503.0" text-anchor="middle" font-family="Liberation Sans" font-size="9" font-weight="normal" fill="#f06868" opacity="1">-12%</text>
<text x="776.6" y="513.0" text-anchor="middle" font-family="Liberation Sans" font-size="9" font-weight="normal" fill="#f06868" opacity="1">-4314</text>
<rect x="754.2" y="543.7" width="46.9" height="6.0" fill="#5a78f4" stroke="#606060" stroke-width="0.8"/>
<text x="776.6" y="559.0" text-anchor="middle" font-family="Liberation Sans" font-size="9" font-weight="normal" fill="#6a78ee" opacity="1">23.17</text>
<rect x="754.2" y="577.5" width="46.9" height="9.0" fill="#f07878" stroke="#606060" stroke-width="0.8"/>
<text x="776.6" y="577.0" text-anchor="middle" font-family="Liberation Sans" font-size="9" font-weight="normal" fill="#f06868" opacity="1">-0.05</text>
<rect x="754.2" y="600.0" width="46.9" height="5.0" fill="#5a78f4" stroke="#606060" stroke-width="0.8"/>
<text x="776.6" y="613.5" text-anchor="middle" font-family="Liberation Sans" font-size="9" font-weight="normal" fill="#6a78ee" opacity="1">23.02</text>
<rect x="754.2" y="632.5" width="46.9" height="7.6" fill="#f07878" stroke="#606060" stroke-width="0.8"/>
<text x="776.6" y="632.0" text-anchor="middle" font-family="Liberation Sans" font-size="9" font-weight="normal" fill="#f06868" opacity="1">-338.61</text>
<rect x="801.1" y="513.5" width="46.9" height="2.9" fill="#f07878" stroke="#606060" stroke-width="0.8"/>
<text x="823.4" y="503.0" text-anchor="middle" font-family="Liberation Sans" font-size="9" font-weight="normal" fill="#f06868" opacity="1">-9%</text>
<text x="823.4" y="513.0" text-anchor="middle" font-family="Liberation Sans" font-size="9" font-weight="normal" fill="#f06868" opacity="1">-3220</text>
<rect x="801.1" y="544.4" width="46.9" height="5.3" fill="#5a78f4" stroke="#606060" stroke-width="0.8"/>
<text x="823.4" y="559.0" text-anchor="middle" font-family="Liberation Sans" font-size="9" font-weight="normal" fill="#6a78ee" opacity="1">20.58</text>
<rect x="801.1" y="577.5" width="46.9" height="9.0" fill="#f07878" stroke="#606060" stroke-width="0.8"/>
<text x="823.4" y="577.0" text-anchor="middle" font-family="Liberation Sans" font-size="9" font-weight="normal" fill="#f06868" opacity="1">-0.05</text>
<rect x="801.1" y="598.2" width="46.9" height="6.8" fill="#5a78f4" stroke="#606060" stroke-width="0.8"/>
<text x="823.4" y="613.5" text-anchor="middle" font-family="Liberation Sans" font-size="9" font-weight="normal" fill="#6a78ee" opacity="1">31.27</text>
<rect x="801.1" y="632.5" width="46.9" height="7.9" fill="#f07878" stroke="#606060" stroke-width="0.8"/>
<text x="823.4" y="632.0" text-anchor="middle" font-family="Liberation Sans" font-size="9" font-weight="normal" fill="#f06868" opacity="1">-352.94</text>
<rect x="848.0" y="513.5" width="46.9" height="2.0" fill="#f07878" stroke="#606060" stroke-width="0.8"/>
<text x="870.2" y="503.0" text-anchor="middle" font-family="Liberation Sans" font-size="9" font-weight="normal" fill="#f06868" opacity="1">-6%</text>
<text x="870.2" y="513.0" text-anchor="middle" font-family="Liberation Sans" font-size="9" font-weight="normal" fill="#f06868" opacity="1">-2255</text>
<rect x="848.0" y="545.1" width="46.9" height="4.6" fill="#5a78f4" stroke="#606060" stroke-width="0.8"/>
<text x="870.2" y="559.0" text-anchor="middle" font-family="Liberation Sans" font-size="9" font-weight="normal" fill="#6a78ee" opacity="1">18.05</text>
<rect x="848.0" y="577.5" width="46.9" height="9.0" fill="#f07878" stroke="#606060" stroke-width="0.8"/>
<text x="870.2" y="577.0" text-anchor="middle" font-family="Liberation Sans" font-size="9" font-weight="normal" fill="#f06868" opacity="1">-0.05</text>
<rect x="848.0" y="597.0" width="46.9" height="8.0" fill="#5a78f4" stroke="#606060" stroke-width="0.8"/>
<text x="870.2" y="613.5" text-anchor="middle" font-family="Liberation Sans" font-size="9" font-weight="normal" fill="#6a78ee" opacity="1">36.91</text>
<rect x="848.0" y="632.5" width="46.9" height="8.0" fill="#f07878" stroke="#606060" stroke-width="0.8"/>
<text x="870.2" y="632.0" text-anchor="middle" font-family="Liberation Sans" font-size="9" font-weight="normal" fill="#f06868" opacity="1">-355.59</text>
<rect x="894.9" y="513.5" width="46.9" height="1.3" fill="#f07878" stroke="#606060" stroke-width="0.8"/>
<text x="917.0" y="503.0" text-anchor="middle" font-family="Liberation Sans" font-size="9" font-weight="normal" fill="#f06868" opacity="1">-4%</text>
<text x="917.0" y="513.0" text-anchor="middle" font-family="Liberation Sans" font-size="9" font-weight="normal" fill="#f06868" opacity="1">-1413</text>
<rect x="894.9" y="545.7" width="46.9" height="4.0" fill="#5a78f4" stroke="#606060" stroke-width="0.8"/>
<text x="917.0" y="559.0" text-anchor="middle" font-family="Liberation Sans" font-size="9" font-weight="normal" fill="#6a78ee" opacity="1">15.65</text>
<rect x="894.9" y="577.5" width="46.9" height="9.0" fill="#f07878" stroke="#606060" stroke-width="0.8"/>
<text x="917.0" y="577.0" text-anchor="middle" font-family="Liberation Sans" font-size="9" font-weight="normal" fill="#f06868" opacity="1">-0.05</text>
<rect x="894.9" y="596.3" width="46.9" height="8.7" fill="#5a78f4" stroke="#606060" stroke-width="0.8"/>
<text x="917.0" y="613.5" text-anchor="middle" font-family="Liberation Sans" font-size="9" font-weight="normal" fill="#6a78ee" opacity="1">40.17</text>
<rect x="894.9" y="632.5" width="46.9" height="7.8" fill="#f07878" stroke="#606060" stroke-width="0.8"/>
<text x="917.0" y="632.0" text-anchor="middle" font-family="Liberation Sans" font-size="9" font-weight="normal" fill="#f06868" opacity="1">-348.20</text>
<rect x="941.8" y="513.5" width="46.9" height="0.6" fill="#f07878" stroke="#606060" stroke-width="0.8"/>
<text x="963.8" y="503.0" text-anchor="middle" font-family="Liberation Sans" font-size="9" font-weight="normal" fill="#f06868" opacity="1">-2%</text>
<text x="963.8" y="513.0" text-anchor="middle" font-family="Liberation Sans" font-size="9" font-weight="normal" fill="#f06868" opacity="1">-687</text>
<rect x="941.8" y="546.3" width="46.9" height="3.4" fill="#5a78f4" stroke="#606060" stroke-width="0.8"/>
<text x="963.8" y="559.0" text-anchor="middle" font-family="Liberation Sans" font-size="9" font-weight="normal" fill="#6a78ee" opacity="1">13.41</text>
<rect x="941.8" y="577.5" width="46.9" height="7.2" fill="#f07878" stroke="#606060" stroke-width="0.8"/>
<text x="963.8" y="577.0" text-anchor="middle" font-family="Liberation Sans" font-size="9" font-weight="normal" fill="#f06868" opacity="1">-0.04</text>
<rect x="941.8" y="596.0" width="46.9" height="9.0" fill="#5a78f4" stroke="#606060" stroke-width="0.8"/>
<text x="963.8" y="613.5" text-anchor="middle" font-family="Liberation Sans" font-size="9" font-weight="normal" fill="#6a78ee" opacity="1">41.37</text>
<rect x="941.8" y="632.5" width="46.9" height="7.5" fill="#f07878" stroke="#606060" stroke-width="0.8"/>
<text x="963.8" y="632.0" text-anchor="middle" font-family="Liberation Sans" font-size="9" font-weight="normal" fill="#f06868" opacity="1">-332.65</text>
<line x1="1035.6" y1="513.5" x2="1082.5" y2="513.5" stroke="#606060" stroke-width="1.5"/>
<text x="1057.4" y="522.0" text-anchor="middle" font-family="Liberation Sans" font-size="9" font-weight="normal" fill="#6a78ee" opacity="1">452</text>
<text x="1057.4" y="530.0" text-anchor="middle" font-family="Liberation Sans" font-size="9" font-weight="normal" fill="#6a78ee" opacity="1">1%</text>
<rect x="1035.6" y="547.3" width="46.9" height="2.4" fill="#5a78f4" stroke="#606060" stroke-width="0.8"/>
<text x="1057.4" y="559.0" text-anchor="middle" font-family="Liberation Sans" font-size="9" font-weight="normal" fill="#6a78ee" opacity="1">9.51</text>
<rect x="1035.6" y="577.5" width="46.9" height="5.4" fill="#f07878" stroke="#606060" stroke-width="0.8"/>
<text x="1057.4" y="577.0" text-anchor="middle" font-family="Liberation Sans" font-size="9" font-weight="normal" fill="#f06868" opacity="1">-0.03</text>
<rect x="1035.6" y="596.5" width="46.9" height="8.5" fill="#5a78f4" stroke="#606060" stroke-width="0.8"/>
<text x="1057.4" y="613.5" text-anchor="middle" font-family="Liberation Sans" font-size="9" font-weight="normal" fill="#6a78ee" opacity="1">39.08</text>
<rect x="1035.6" y="632.5" width="46.9" height="6.4" fill="#f07878" stroke="#606060" stroke-width="0.8"/>
<text x="1057.4" y="632.0" text-anchor="middle" font-family="Liberation Sans" font-size="9" font-weight="normal" fill="#f06868" opacity="1">-284.83</text>
<line x1="988.7" y1="513.5" x2="1035.6" y2="513.5" stroke="#606060" stroke-width="1.5"/>
<rect x="988.7" y="546.8" width="46.9" height="2.9" fill="#5a78f4" stroke="#606060" stroke-width="0.8"/>
<rect x="988.7" y="577.5" width="46.9" height="7.2" fill="#f07878" stroke="#606060" stroke-width="0.8"/>
<rect x="988.7" y="596.0" width="46.9" height="9.0" fill="#5a78f4" stroke="#606060" stroke-width="0.8"/>
<rect x="988.7" y="632.5" width="46.9" height="7.0" fill="#f07878" stroke="#606060" stroke-width="0.8"/>
<rect x="994.5" y="475.5" width="42" height="173" rx="4" fill="#e8eef6" fill-opacity="0.85" stroke="#8a96a8" stroke-width="1"/>
<text x="1016.0" y="484.0" text-anchor="middle" font-family="Liberation Sans" font-size="9" font-weight="normal" fill="#303030" opacity="1">6305.60</text>
<text x="1012.0" y="503.0" text-anchor="middle" font-family="Liberation Sans" font-size="9" font-weight="normal" fill="#f06868" opacity="0.12">0%</text>
<text x="1009.0" y="513.0" text-anchor="middle" font-family="Liberation Sans" font-size="9" font-weight="normal" fill="#f06868" opacity="0.15">-6</text>
<text x="1017.0" y="513.0" text-anchor="middle" font-family="Liberation Sans" font-size="10" font-weight="normal" fill="#f02a2a" opacity="1">-6</text>
<text x="1016.0" y="526.0" text-anchor="middle" font-family="Liberation Sans" font-size="10" font-weight="normal" fill="#f02a2a" opacity="1">0.0%</text>
<text x="1016.0" y="559.0" text-anchor="middle" font-family="Liberation Sans" font-size="9" font-weight="normal" fill="#6a78ee" opacity="0.15">11.55</text>
<text x="1016.0" y="553.0" text-anchor="middle" font-family="Liberation Sans" font-size="10" font-weight="normal" fill="#2a2af0" opacity="1">11.14</text>
<text x="1014.0" y="577.0" text-anchor="middle" font-family="Liberation Sans" font-size="9" font-weight="normal" fill="#f06868" opacity="0.15">-0.04</text>
<text x="1016.0" y="582.0" text-anchor="middle" font-family="Liberation Sans" font-size="10" font-weight="normal" fill="#f02a2a" opacity="1">-0.04</text>
<text x="1016.0" y="613.5" text-anchor="middle" font-family="Liberation Sans" font-size="9" font-weight="normal" fill="#6a78ee" opacity="0.15">40.88</text>
<text x="1016.0" y="609.0" text-anchor="middle" font-family="Liberation Sans" font-size="10" font-weight="normal" fill="#2a2af0" opacity="1">40.74</text>
<text x="1014.0" y="632.0" text-anchor="middle" font-family="Liberation Sans" font-size="9" font-weight="normal" fill="#f06868" opacity="0.15">-308.88</text>
<text x="1016.0" y="636.0" text-anchor="middle" font-family="Liberation Sans" font-size="10" font-weight="normal" fill="#f02a2a" opacity="1">-308.14</text>
</svg>
<div class="r" style="left:515px;top:652px;width:565px;height:21px;background:#283551;"></div>
<div class="r" style="left:515px;top:673px;width:565px;height:2px;background:#c0c6d2;"></div>
<div class="t" style="right:6px;top:656.99px;font-size:10.5px;color:#e8ecf4;font-weight:normal;">300%</div>
<!--BODY_END-->
</body></html>
